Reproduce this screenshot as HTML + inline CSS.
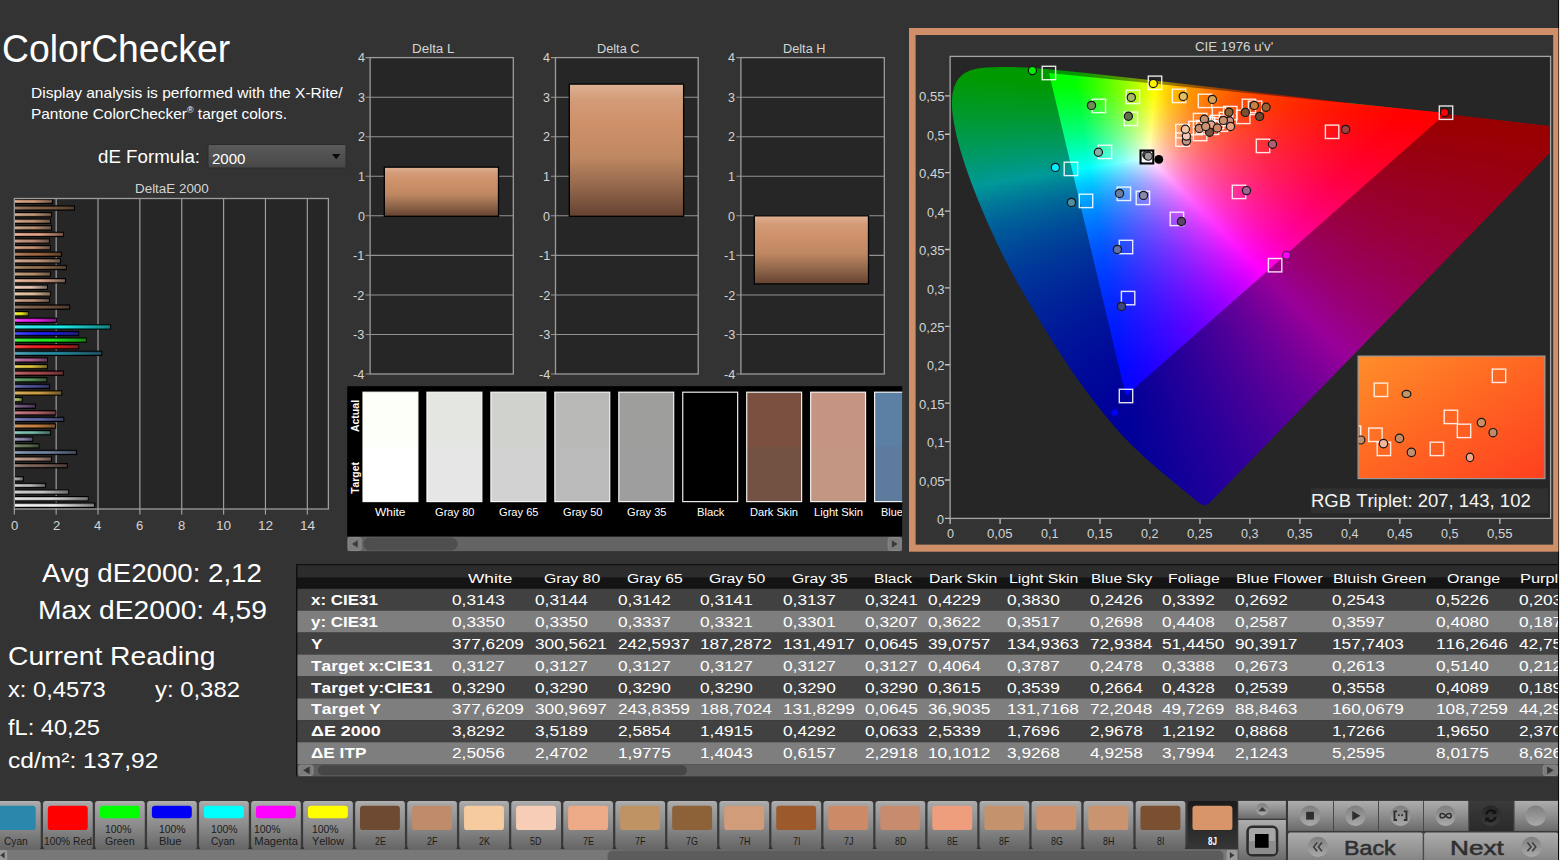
<!DOCTYPE html>
<html lang="en"><head><meta charset="utf-8"><title>ColorChecker</title>
<style>
html,body{margin:0;padding:0}
body{width:1561px;height:860px;overflow:hidden;background:#333;position:relative;font-family:"Liberation Sans",sans-serif;font-kerning:none}
svg{position:absolute;left:0;top:0}
.t{position:absolute;white-space:pre;line-height:1;color:#fff;transform-origin:0 0}
.cie{position:absolute;overflow:hidden}
.cl{position:absolute;left:0;top:0;width:100%;height:100%;box-sizing:border-box}
.cl i{display:block;height:2px}
</style></head>
<body>
<svg width="1561" height="860" viewBox="0 0 1561 860"><linearGradient id="dd" x1="0" y1="0" x2="0" y2="1"><stop offset="0" stop-color="#5a5a5a"/><stop offset="1" stop-color="#474747"/></linearGradient><rect x="208" y="144.5" width="138" height="23.5" rx="1.5" fill="url(#dd)" stroke="#2c2c2c"/><path d="M332 154h8.4l-4.2 5.2z" fill="#0a0a0a"/><rect x="14.3" y="198.5" width="314.1" height="310.5" fill="#262626"/><path d="M56.16 198.5V514.5M98.02 198.5V514.5M139.88 198.5V514.5M181.74 198.5V514.5M223.6 198.5V514.5M265.46 198.5V514.5M307.32 198.5V514.5M14.3 509V514.5" stroke="#a2a2a2" stroke-width="1.15" fill="none"/><linearGradient id="bs" x1="0" y1="0" x2="1" y2="0"><stop offset="0" stop-color="#fff" stop-opacity=".22"/><stop offset=".5" stop-color="#000" stop-opacity=".05"/><stop offset="1" stop-color="#000" stop-opacity=".55"/></linearGradient><linearGradient id="bv" x1="0" y1="0" x2="0" y2="1"><stop offset="0" stop-color="#000" stop-opacity=".3"/><stop offset=".5" stop-color="#fff" stop-opacity=".12"/><stop offset="1" stop-color="#000" stop-opacity=".3"/></linearGradient><rect x="14.4" y="503.15" width="80.16" height="4.3" fill="#ffffff" stroke="#000" stroke-width="1.1"/><rect x="14.9" y="503.7" width="79.16" height="3.2" fill="url(#bs)"/><rect x="14.9" y="503.7" width="79.16" height="3.2" fill="url(#bv)"/><rect x="14.4" y="496.54" width="73.67" height="4.3" fill="#e6e6e6" stroke="#000" stroke-width="1.1"/><rect x="14.9" y="497.09" width="72.67" height="3.2" fill="url(#bs)"/><rect x="14.9" y="497.09" width="72.67" height="3.2" fill="url(#bv)"/><rect x="14.4" y="489.93" width="54.21" height="4.3" fill="#d2d2d2" stroke="#000" stroke-width="1.1"/><rect x="14.9" y="490.48" width="53.21" height="3.2" fill="url(#bs)"/><rect x="14.9" y="490.48" width="53.21" height="3.2" fill="url(#bv)"/><rect x="14.4" y="483.33" width="31.19" height="4.3" fill="#bababa" stroke="#000" stroke-width="1.1"/><rect x="14.9" y="483.88" width="30.19" height="3.2" fill="url(#bs)"/><rect x="14.9" y="483.88" width="30.19" height="3.2" fill="url(#bv)"/><rect x="14.4" y="476.72" width="9" height="4.3" fill="#9e9e9e" stroke="#000" stroke-width="1.1"/><rect x="14.9" y="477.27" width="8" height="3.2" fill="url(#bs)"/><rect x="14.9" y="477.27" width="8" height="3.2" fill="url(#bv)"/><rect x="14.4" y="463.51" width="52.95" height="4.3" fill="#735244" stroke="#000" stroke-width="1.1"/><rect x="14.9" y="464.06" width="51.95" height="3.2" fill="url(#bs)"/><rect x="14.9" y="464.06" width="51.95" height="3.2" fill="url(#bv)"/><rect x="14.4" y="456.9" width="37.05" height="4.3" fill="#c29682" stroke="#000" stroke-width="1.1"/><rect x="14.9" y="457.45" width="36.05" height="3.2" fill="url(#bs)"/><rect x="14.9" y="457.45" width="36.05" height="3.2" fill="url(#bv)"/><rect x="14.4" y="450.3" width="62.16" height="4.3" fill="#627a9d" stroke="#000" stroke-width="1.1"/><rect x="14.9" y="450.85" width="61.16" height="3.2" fill="url(#bs)"/><rect x="14.9" y="450.85" width="61.16" height="3.2" fill="url(#bv)"/><rect x="14.4" y="443.69" width="24.7" height="4.3" fill="#576c43" stroke="#000" stroke-width="1.1"/><rect x="14.9" y="444.24" width="23.7" height="3.2" fill="url(#bs)"/><rect x="14.9" y="444.24" width="23.7" height="3.2" fill="url(#bv)"/><rect x="14.4" y="437.08" width="18.42" height="4.3" fill="#8580b1" stroke="#000" stroke-width="1.1"/><rect x="14.9" y="437.63" width="17.42" height="3.2" fill="url(#bs)"/><rect x="14.9" y="437.63" width="17.42" height="3.2" fill="url(#bv)"/><rect x="14.4" y="430.48" width="36.21" height="4.3" fill="#67bdaa" stroke="#000" stroke-width="1.1"/><rect x="14.9" y="431.03" width="35.21" height="3.2" fill="url(#bs)"/><rect x="14.9" y="431.03" width="35.21" height="3.2" fill="url(#bv)"/><rect x="14.4" y="423.87" width="41.23" height="4.3" fill="#d67e2c" stroke="#000" stroke-width="1.1"/><rect x="14.9" y="424.42" width="40.23" height="3.2" fill="url(#bs)"/><rect x="14.9" y="424.42" width="40.23" height="3.2" fill="url(#bv)"/><rect x="14.4" y="417.26" width="49.39" height="4.3" fill="#505ba6" stroke="#000" stroke-width="1.1"/><rect x="14.9" y="417.81" width="48.39" height="3.2" fill="url(#bs)"/><rect x="14.9" y="417.81" width="48.39" height="3.2" fill="url(#bv)"/><rect x="14.4" y="410.66" width="41.44" height="4.3" fill="#c15a63" stroke="#000" stroke-width="1.1"/><rect x="14.9" y="411.21" width="40.44" height="3.2" fill="url(#bs)"/><rect x="14.9" y="411.21" width="40.44" height="3.2" fill="url(#bv)"/><rect x="14.4" y="404.05" width="21.14" height="4.3" fill="#5e3c6c" stroke="#000" stroke-width="1.1"/><rect x="14.9" y="404.6" width="20.14" height="3.2" fill="url(#bs)"/><rect x="14.9" y="404.6" width="20.14" height="3.2" fill="url(#bv)"/><rect x="14.4" y="397.44" width="7.95" height="4.3" fill="#9dbc40" stroke="#000" stroke-width="1.1"/><rect x="14.9" y="397.99" width="6.95" height="3.2" fill="url(#bs)"/><rect x="14.9" y="397.99" width="6.95" height="3.2" fill="url(#bv)"/><rect x="14.4" y="390.84" width="47.3" height="4.3" fill="#e0a32e" stroke="#000" stroke-width="1.1"/><rect x="14.9" y="391.39" width="46.3" height="3.2" fill="url(#bs)"/><rect x="14.9" y="391.39" width="46.3" height="3.2" fill="url(#bv)"/><rect x="14.4" y="384.23" width="35.16" height="4.3" fill="#383d96" stroke="#000" stroke-width="1.1"/><rect x="14.9" y="384.78" width="34.16" height="3.2" fill="url(#bs)"/><rect x="14.9" y="384.78" width="34.16" height="3.2" fill="url(#bv)"/><rect x="14.4" y="377.63" width="32.44" height="4.3" fill="#469449" stroke="#000" stroke-width="1.1"/><rect x="14.9" y="378.18" width="31.44" height="3.2" fill="url(#bs)"/><rect x="14.9" y="378.18" width="31.44" height="3.2" fill="url(#bv)"/><rect x="14.4" y="371.02" width="48.98" height="4.3" fill="#af363c" stroke="#000" stroke-width="1.1"/><rect x="14.9" y="371.57" width="47.98" height="3.2" fill="url(#bs)"/><rect x="14.9" y="371.57" width="47.98" height="3.2" fill="url(#bv)"/><rect x="14.4" y="364.41" width="33.07" height="4.3" fill="#e7c71f" stroke="#000" stroke-width="1.1"/><rect x="14.9" y="364.96" width="32.07" height="3.2" fill="url(#bs)"/><rect x="14.9" y="364.96" width="32.07" height="3.2" fill="url(#bv)"/><rect x="14.4" y="357.81" width="33.07" height="4.3" fill="#bb5695" stroke="#000" stroke-width="1.1"/><rect x="14.9" y="358.36" width="32.07" height="3.2" fill="url(#bs)"/><rect x="14.9" y="358.36" width="32.07" height="3.2" fill="url(#bv)"/><rect x="14.4" y="351.2" width="87.28" height="4.3" fill="#0885a1" stroke="#000" stroke-width="1.1"/><rect x="14.9" y="351.75" width="86.28" height="3.2" fill="url(#bs)"/><rect x="14.9" y="351.75" width="86.28" height="3.2" fill="url(#bv)"/><rect x="14.4" y="344.59" width="64.26" height="4.3" fill="#ff0000" stroke="#000" stroke-width="1.1"/><rect x="14.9" y="345.14" width="63.26" height="3.2" fill="url(#bs)"/><rect x="14.9" y="345.14" width="63.26" height="3.2" fill="url(#bv)"/><rect x="14.4" y="337.99" width="71.79" height="4.3" fill="#00ff00" stroke="#000" stroke-width="1.1"/><rect x="14.9" y="338.54" width="70.79" height="3.2" fill="url(#bs)"/><rect x="14.9" y="338.54" width="70.79" height="3.2" fill="url(#bv)"/><rect x="14.4" y="331.38" width="64.26" height="4.3" fill="#0000ff" stroke="#000" stroke-width="1.1"/><rect x="14.9" y="331.93" width="63.26" height="3.2" fill="url(#bs)"/><rect x="14.9" y="331.93" width="63.26" height="3.2" fill="url(#bv)"/><rect x="14.4" y="324.77" width="96.07" height="4.3" fill="#00ffff" stroke="#000" stroke-width="1.1"/><rect x="14.9" y="325.32" width="95.07" height="3.2" fill="url(#bs)"/><rect x="14.9" y="325.32" width="95.07" height="3.2" fill="url(#bv)"/><rect x="14.4" y="318.17" width="42.07" height="4.3" fill="#ff00ff" stroke="#000" stroke-width="1.1"/><rect x="14.9" y="318.72" width="41.07" height="3.2" fill="url(#bs)"/><rect x="14.9" y="318.72" width="41.07" height="3.2" fill="url(#bv)"/><rect x="14.4" y="311.56" width="13.81" height="4.3" fill="#ffff00" stroke="#000" stroke-width="1.1"/><rect x="14.9" y="312.11" width="12.81" height="3.2" fill="url(#bs)"/><rect x="14.9" y="312.11" width="12.81" height="3.2" fill="url(#bv)"/><rect x="14.4" y="304.96" width="55.26" height="4.3" fill="#6f4a32" stroke="#000" stroke-width="1.1"/><rect x="14.9" y="305.51" width="54.26" height="3.2" fill="url(#bs)"/><rect x="14.9" y="305.51" width="54.26" height="3.2" fill="url(#bv)"/><rect x="14.4" y="298.35" width="34.95" height="4.3" fill="#c08b6b" stroke="#000" stroke-width="1.1"/><rect x="14.9" y="298.9" width="33.95" height="3.2" fill="url(#bs)"/><rect x="14.9" y="298.9" width="33.95" height="3.2" fill="url(#bv)"/><rect x="14.4" y="291.74" width="36" height="4.3" fill="#f6cba0" stroke="#000" stroke-width="1.1"/><rect x="14.9" y="292.29" width="35" height="3.2" fill="url(#bs)"/><rect x="14.9" y="292.29" width="35" height="3.2" fill="url(#bv)"/><rect x="14.4" y="285.14" width="33.07" height="4.3" fill="#f8cdb8" stroke="#000" stroke-width="1.1"/><rect x="14.9" y="285.69" width="32.07" height="3.2" fill="url(#bs)"/><rect x="14.9" y="285.69" width="32.07" height="3.2" fill="url(#bv)"/><rect x="14.4" y="278.53" width="51.07" height="4.3" fill="#edaa86" stroke="#000" stroke-width="1.1"/><rect x="14.9" y="279.08" width="50.07" height="3.2" fill="url(#bs)"/><rect x="14.9" y="279.08" width="50.07" height="3.2" fill="url(#bv)"/><rect x="14.4" y="271.92" width="36" height="4.3" fill="#c09364" stroke="#000" stroke-width="1.1"/><rect x="14.9" y="272.47" width="35" height="3.2" fill="url(#bs)"/><rect x="14.9" y="272.47" width="35" height="3.2" fill="url(#bv)"/><rect x="14.4" y="265.32" width="51.91" height="4.3" fill="#8e6238" stroke="#000" stroke-width="1.1"/><rect x="14.9" y="265.87" width="50.91" height="3.2" fill="url(#bs)"/><rect x="14.9" y="265.87" width="50.91" height="3.2" fill="url(#bv)"/><rect x="14.4" y="258.71" width="46.05" height="4.3" fill="#d09c7a" stroke="#000" stroke-width="1.1"/><rect x="14.9" y="259.26" width="45.05" height="3.2" fill="url(#bs)"/><rect x="14.9" y="259.26" width="45.05" height="3.2" fill="url(#bv)"/><rect x="14.4" y="252.1" width="47.09" height="4.3" fill="#9c5a2c" stroke="#000" stroke-width="1.1"/><rect x="14.9" y="252.65" width="46.09" height="3.2" fill="url(#bs)"/><rect x="14.9" y="252.65" width="46.09" height="3.2" fill="url(#bv)"/><rect x="14.4" y="245.5" width="36" height="4.3" fill="#cc8a66" stroke="#000" stroke-width="1.1"/><rect x="14.9" y="246.05" width="35" height="3.2" fill="url(#bs)"/><rect x="14.9" y="246.05" width="35" height="3.2" fill="url(#bv)"/><rect x="14.4" y="238.89" width="34.95" height="4.3" fill="#c98b6e" stroke="#000" stroke-width="1.1"/><rect x="14.9" y="239.44" width="33.95" height="3.2" fill="url(#bs)"/><rect x="14.9" y="239.44" width="33.95" height="3.2" fill="url(#bv)"/><rect x="14.4" y="232.29" width="48.98" height="4.3" fill="#ee9e7c" stroke="#000" stroke-width="1.1"/><rect x="14.9" y="232.84" width="47.98" height="3.2" fill="url(#bs)"/><rect x="14.9" y="232.84" width="47.98" height="3.2" fill="url(#bv)"/><rect x="14.4" y="225.68" width="37.05" height="4.3" fill="#c4926c" stroke="#000" stroke-width="1.1"/><rect x="14.9" y="226.23" width="36.05" height="3.2" fill="url(#bs)"/><rect x="14.9" y="226.23" width="36.05" height="3.2" fill="url(#bv)"/><rect x="14.4" y="219.07" width="36" height="4.3" fill="#cc9370" stroke="#000" stroke-width="1.1"/><rect x="14.9" y="219.62" width="35" height="3.2" fill="url(#bs)"/><rect x="14.9" y="219.62" width="35" height="3.2" fill="url(#bv)"/><rect x="14.4" y="212.47" width="37.05" height="4.3" fill="#c9946f" stroke="#000" stroke-width="1.1"/><rect x="14.9" y="213.02" width="36.05" height="3.2" fill="url(#bs)"/><rect x="14.9" y="213.02" width="36.05" height="3.2" fill="url(#bv)"/><rect x="14.4" y="205.86" width="60.07" height="4.3" fill="#7b5030" stroke="#000" stroke-width="1.1"/><rect x="14.9" y="206.41" width="59.07" height="3.2" fill="url(#bs)"/><rect x="14.9" y="206.41" width="59.07" height="3.2" fill="url(#bv)"/><rect x="14.4" y="199.25" width="38.09" height="4.3" fill="#d8956a" stroke="#000" stroke-width="1.1"/><rect x="14.9" y="199.8" width="37.09" height="3.2" fill="url(#bs)"/><rect x="14.9" y="199.8" width="37.09" height="3.2" fill="url(#bv)"/><rect x="14.3" y="198.5" width="314.1" height="310.5" fill="none" stroke="#9c9c9c" stroke-width="1.3"/><linearGradient id="sk" x1="0" y1="0" x2="0" y2="1"><stop offset="0" stop-color="#deb294"/><stop offset=".12" stop-color="#d39b78"/><stop offset=".3" stop-color="#ce916a"/><stop offset=".55" stop-color="#bf8862"/><stop offset=".8" stop-color="#8e6449"/><stop offset="1" stop-color="#654231"/></linearGradient><rect x="370.1" y="57.6" width="143.2" height="316.4" fill="#262626"/><path d="M365.5 334.45H513.3M365.5 294.9H513.3M365.5 255.35H513.3M365.5 215.8H513.3M365.5 176.25H513.3M365.5 136.7H513.3M365.5 97.15H513.3M365.5 57.6H370.1M365.5 374H370.1" stroke="#929292" stroke-width="1.05" fill="none"/><rect x="370.1" y="57.6" width="143.2" height="316.4" fill="none" stroke="#9c9c9c" stroke-width="1.3"/><rect x="384.3" y="167.15" width="114.2" height="49.15" fill="url(#sk)" stroke="#000" stroke-width="1.3"/><rect x="555.5" y="57.6" width="142.7" height="316.4" fill="#262626"/><path d="M550.9 334.45H698.2M550.9 294.9H698.2M550.9 255.35H698.2M550.9 215.8H698.2M550.9 176.25H698.2M550.9 136.7H698.2M550.9 97.15H698.2M550.9 57.6H555.5M550.9 374H555.5" stroke="#929292" stroke-width="1.05" fill="none"/><rect x="555.5" y="57.6" width="142.7" height="316.4" fill="none" stroke="#9c9c9c" stroke-width="1.3"/><rect x="569.3" y="84.1" width="114.3" height="132.2" fill="url(#sk)" stroke="#000" stroke-width="1.3"/><rect x="740.9" y="57.6" width="143.4" height="316.4" fill="#262626"/><path d="M736.3 334.45H884.3M736.3 294.9H884.3M736.3 255.35H884.3M736.3 215.8H884.3M736.3 176.25H884.3M736.3 136.7H884.3M736.3 97.15H884.3M736.3 57.6H740.9M736.3 374H740.9" stroke="#929292" stroke-width="1.05" fill="none"/><rect x="740.9" y="57.6" width="143.4" height="316.4" fill="none" stroke="#9c9c9c" stroke-width="1.3"/><rect x="754.3" y="215.8" width="114.2" height="68.13" fill="url(#sk)" stroke="#000" stroke-width="1.3"/><rect x="347.2" y="386.2" width="555" height="165.2" fill="#000"/><clipPath id="swc"><rect x="347.2" y="386.2" width="555" height="165.2"/></clipPath><g clip-path="url(#swc)"><rect x="363" y="392.2" width="54.9" height="54.9" fill="#fdfff9"/><rect x="363" y="446.9" width="54.9" height="54.7" fill="#ffffff"/><rect x="363" y="392.2" width="54.9" height="109.4" fill="none" stroke="#fff" stroke-width="1.2" stroke-opacity=".92"/><rect x="426.95" y="392.2" width="54.9" height="54.9" fill="#e3e6e1"/><rect x="426.95" y="446.9" width="54.9" height="54.7" fill="#e6e6e6"/><rect x="426.95" y="392.2" width="54.9" height="109.4" fill="none" stroke="#fff" stroke-width="1.2" stroke-opacity=".92"/><rect x="490.9" y="392.2" width="54.9" height="54.9" fill="#d0d2cd"/><rect x="490.9" y="446.9" width="54.9" height="54.7" fill="#d2d2d2"/><rect x="490.9" y="392.2" width="54.9" height="109.4" fill="none" stroke="#fff" stroke-width="1.2" stroke-opacity=".92"/><rect x="554.85" y="392.2" width="54.9" height="54.9" fill="#b9bab8"/><rect x="554.85" y="446.9" width="54.9" height="54.7" fill="#bababa"/><rect x="554.85" y="392.2" width="54.9" height="109.4" fill="none" stroke="#fff" stroke-width="1.2" stroke-opacity=".92"/><rect x="618.8" y="392.2" width="54.9" height="54.9" fill="#9e9f9d"/><rect x="618.8" y="446.9" width="54.9" height="54.7" fill="#9e9e9e"/><rect x="618.8" y="392.2" width="54.9" height="109.4" fill="none" stroke="#fff" stroke-width="1.2" stroke-opacity=".92"/><rect x="682.75" y="392.2" width="54.9" height="54.9" fill="#000000"/><rect x="682.75" y="446.9" width="54.9" height="54.7" fill="#000000"/><rect x="682.75" y="392.2" width="54.9" height="109.4" fill="none" stroke="#fff" stroke-width="1.2" stroke-opacity=".92"/><rect x="746.7" y="392.2" width="54.9" height="54.9" fill="#7c5040"/><rect x="746.7" y="446.9" width="54.9" height="54.7" fill="#735244"/><rect x="746.7" y="392.2" width="54.9" height="109.4" fill="none" stroke="#fff" stroke-width="1.2" stroke-opacity=".92"/><rect x="810.65" y="392.2" width="54.9" height="54.9" fill="#c69483"/><rect x="810.65" y="446.9" width="54.9" height="54.7" fill="#c29682"/><rect x="810.65" y="392.2" width="54.9" height="109.4" fill="none" stroke="#fff" stroke-width="1.2" stroke-opacity=".92"/><rect x="874.6" y="392.2" width="54.9" height="54.9" fill="#5b80a4"/><rect x="874.6" y="446.9" width="54.9" height="54.7" fill="#5e7a9c"/><rect x="874.6" y="392.2" width="54.9" height="109.4" fill="none" stroke="#fff" stroke-width="1.2" stroke-opacity=".92"/></g><rect x="347.2" y="536.6" width="555" height="14.8" fill="#646464"/><rect x="363.4" y="537.6" width="94.2" height="12.8" rx="6.4" fill="#4e4e4e"/><rect x="348.2" y="537.6" width="13" height="12.8" rx="2" fill="#7c7c7c" stroke="#8a8a8a"/><path d="M357.7 540.2v7.6l-5.6-3.8z" fill="#3a3a3a"/><rect x="888.2" y="537.6" width="13" height="12.8" rx="2" fill="#7c7c7c" stroke="#8a8a8a"/><path d="M891.9 540.2v7.6l5.6-3.8z" fill="#3a3a3a"/><rect x="296" y="564" width="1262.2" height="212.4" fill="#0e0e0e"/><rect x="297.4" y="565.2" width="1260.8" height="12.5" fill="#2c2c2c"/><rect x="297.4" y="577.7" width="1260.8" height="11" fill="#141414"/><rect x="297.4" y="588.7" width="1260.8" height="22.03" fill="#414141"/><rect x="297.4" y="610.63" width="1260.8" height="22.03" fill="#7e7e7e"/><rect x="297.4" y="632.56" width="1260.8" height="22.03" fill="#414141"/><rect x="297.4" y="654.49" width="1260.8" height="22.03" fill="#7e7e7e"/><rect x="297.4" y="676.42" width="1260.8" height="22.03" fill="#414141"/><rect x="297.4" y="698.35" width="1260.8" height="22.03" fill="#7e7e7e"/><rect x="297.4" y="720.28" width="1260.8" height="22.03" fill="#414141"/><rect x="297.4" y="742.21" width="1260.8" height="22.03" fill="#7e7e7e"/><rect x="297.4" y="764.14" width="1260.8" height="12.4" fill="#5e5e5e"/><rect x="317.9" y="765.34" width="369" height="10" rx="5" fill="#464646"/><rect x="298.8" y="765.14" width="14.2" height="10.4" rx="2" fill="#7c7c7c" stroke="#8a8a8a"/><path d="M309.6 766.54v7.6l-6.4-3.8z" fill="#333"/><rect x="1543.2" y="765.14" width="14.2" height="10.4" rx="2" fill="#7c7c7c" stroke="#8a8a8a"/><path d="M1547.2 766.54v7.6l6.4-3.8z" fill="#333"/><linearGradient id="tb" x1="0" y1="0" x2="0" y2="1"><stop offset="0" stop-color="#b4b4b4"/><stop offset=".06" stop-color="#a6a6a6"/><stop offset=".5" stop-color="#8c8c8c"/><stop offset="1" stop-color="#656565"/></linearGradient><linearGradient id="ts" x1="0" y1="0" x2="0" y2="1"><stop offset="0" stop-color="#1b1b1b"/><stop offset="1" stop-color="#363636"/></linearGradient><linearGradient id="bt" x1="0" y1="0" x2="0" y2="1"><stop offset="0" stop-color="#adadad"/><stop offset=".5" stop-color="#8e8e8e"/><stop offset="1" stop-color="#6a6a6a"/></linearGradient><linearGradient id="bd" x1="0" y1="0" x2="0" y2="1"><stop offset="0" stop-color="#3a3a3a"/><stop offset="1" stop-color="#2a2a2a"/></linearGradient><linearGradient id="ci" x1="0" y1="0" x2="0" y2="1"><stop offset="0" stop-color="#7e7e7e"/><stop offset="1" stop-color="#aaa"/></linearGradient><linearGradient id="cd" x1="0" y1="0" x2="0" y2="1"><stop offset="0" stop-color="#262626"/><stop offset="1" stop-color="#3c3c3c"/></linearGradient><rect x="0" y="802.4" width="1238" height="46.9" fill="#3a3a3a"/><path d="M-9.03 849.3V803.9q0-3 3-3H37.7q3 0 3 3V849.3z" fill="url(#tb)"/><rect x="-4.23" y="805.7" width="39.93" height="24.4" rx="3.2" fill="#2a88ad"/><path d="M43 849.3V803.9q0-3 3-3H89.73q3 0 3 3V849.3z" fill="url(#tb)"/><rect x="47.8" y="805.7" width="39.93" height="24.4" rx="3.2" fill="#ff0000"/><path d="M95.03 849.3V803.9q0-3 3-3H141.76q3 0 3 3V849.3z" fill="url(#tb)"/><rect x="99.83" y="805.7" width="39.93" height="12.6" rx="3.2" fill="#00ff00"/><path d="M147.06 849.3V803.9q0-3 3-3H193.79q3 0 3 3V849.3z" fill="url(#tb)"/><rect x="151.86" y="805.7" width="39.93" height="12.6" rx="3.2" fill="#0000f4"/><path d="M199.09 849.3V803.9q0-3 3-3H245.82q3 0 3 3V849.3z" fill="url(#tb)"/><rect x="203.89" y="805.7" width="39.93" height="12.6" rx="3.2" fill="#00ffff"/><path d="M251.12 849.3V803.9q0-3 3-3H297.85q3 0 3 3V849.3z" fill="url(#tb)"/><rect x="255.92" y="805.7" width="39.93" height="12.6" rx="3.2" fill="#ff00ff"/><path d="M303.15 849.3V803.9q0-3 3-3H349.88q3 0 3 3V849.3z" fill="url(#tb)"/><rect x="307.95" y="805.7" width="39.93" height="12.6" rx="3.2" fill="#ffff00"/><path d="M355.18 849.3V803.9q0-3 3-3H401.91q3 0 3 3V849.3z" fill="url(#tb)"/><rect x="359.98" y="805.7" width="39.93" height="24.4" rx="3.2" fill="#6f4a32"/><path d="M407.21 849.3V803.9q0-3 3-3H453.94q3 0 3 3V849.3z" fill="url(#tb)"/><rect x="412.01" y="805.7" width="39.93" height="24.4" rx="3.2" fill="#c08b6b"/><path d="M459.24 849.3V803.9q0-3 3-3H505.97q3 0 3 3V849.3z" fill="url(#tb)"/><rect x="464.04" y="805.7" width="39.93" height="24.4" rx="3.2" fill="#f6cba0"/><path d="M511.27 849.3V803.9q0-3 3-3H558q3 0 3 3V849.3z" fill="url(#tb)"/><rect x="516.07" y="805.7" width="39.93" height="24.4" rx="3.2" fill="#f8cdb8"/><path d="M563.3 849.3V803.9q0-3 3-3H610.03q3 0 3 3V849.3z" fill="url(#tb)"/><rect x="568.1" y="805.7" width="39.93" height="24.4" rx="3.2" fill="#edaa86"/><path d="M615.33 849.3V803.9q0-3 3-3H662.06q3 0 3 3V849.3z" fill="url(#tb)"/><rect x="620.13" y="805.7" width="39.93" height="24.4" rx="3.2" fill="#c09364"/><path d="M667.36 849.3V803.9q0-3 3-3H714.09q3 0 3 3V849.3z" fill="url(#tb)"/><rect x="672.16" y="805.7" width="39.93" height="24.4" rx="3.2" fill="#8e6238"/><path d="M719.39 849.3V803.9q0-3 3-3H766.12q3 0 3 3V849.3z" fill="url(#tb)"/><rect x="724.19" y="805.7" width="39.93" height="24.4" rx="3.2" fill="#d09c7a"/><path d="M771.42 849.3V803.9q0-3 3-3H818.15q3 0 3 3V849.3z" fill="url(#tb)"/><rect x="776.22" y="805.7" width="39.93" height="24.4" rx="3.2" fill="#9c5a2c"/><path d="M823.45 849.3V803.9q0-3 3-3H870.18q3 0 3 3V849.3z" fill="url(#tb)"/><rect x="828.25" y="805.7" width="39.93" height="24.4" rx="3.2" fill="#cc8a66"/><path d="M875.48 849.3V803.9q0-3 3-3H922.21q3 0 3 3V849.3z" fill="url(#tb)"/><rect x="880.28" y="805.7" width="39.93" height="24.4" rx="3.2" fill="#c98b6e"/><path d="M927.51 849.3V803.9q0-3 3-3H974.24q3 0 3 3V849.3z" fill="url(#tb)"/><rect x="932.31" y="805.7" width="39.93" height="24.4" rx="3.2" fill="#ee9e7c"/><path d="M979.54 849.3V803.9q0-3 3-3H1026.27q3 0 3 3V849.3z" fill="url(#tb)"/><rect x="984.34" y="805.7" width="39.93" height="24.4" rx="3.2" fill="#c4926c"/><path d="M1031.57 849.3V803.9q0-3 3-3H1078.3q3 0 3 3V849.3z" fill="url(#tb)"/><rect x="1036.37" y="805.7" width="39.93" height="24.4" rx="3.2" fill="#cc9370"/><path d="M1083.6 849.3V803.9q0-3 3-3H1130.33q3 0 3 3V849.3z" fill="url(#tb)"/><rect x="1088.4" y="805.7" width="39.93" height="24.4" rx="3.2" fill="#c9946f"/><path d="M1135.63 849.3V803.9q0-3 3-3H1182.36q3 0 3 3V849.3z" fill="url(#tb)"/><rect x="1140.43" y="805.7" width="39.93" height="24.4" rx="3.2" fill="#7b5030"/><path d="M1187.66 849.3V803.9q0-3 3-3H1234.39q3 0 3 3V849.3z" fill="url(#ts)"/><rect x="1192.46" y="805.7" width="39.93" height="24.4" rx="3.2" fill="#d8956a"/><path d="M41.9 846.1l-2.2 3.4h5l-2.2-3.4z" fill="#333"/><path d="M93.93 846.1l-2.2 3.4h5l-2.2-3.4z" fill="#333"/><path d="M145.96 846.1l-2.2 3.4h5l-2.2-3.4z" fill="#333"/><path d="M197.99 846.1l-2.2 3.4h5l-2.2-3.4z" fill="#333"/><path d="M250.02 846.1l-2.2 3.4h5l-2.2-3.4z" fill="#333"/><path d="M302.05 846.1l-2.2 3.4h5l-2.2-3.4z" fill="#333"/><path d="M354.08 846.1l-2.2 3.4h5l-2.2-3.4z" fill="#333"/><path d="M406.11 846.1l-2.2 3.4h5l-2.2-3.4z" fill="#333"/><path d="M458.14 846.1l-2.2 3.4h5l-2.2-3.4z" fill="#333"/><path d="M510.17 846.1l-2.2 3.4h5l-2.2-3.4z" fill="#333"/><path d="M562.2 846.1l-2.2 3.4h5l-2.2-3.4z" fill="#333"/><path d="M614.23 846.1l-2.2 3.4h5l-2.2-3.4z" fill="#333"/><path d="M666.26 846.1l-2.2 3.4h5l-2.2-3.4z" fill="#333"/><path d="M718.29 846.1l-2.2 3.4h5l-2.2-3.4z" fill="#333"/><path d="M770.32 846.1l-2.2 3.4h5l-2.2-3.4z" fill="#333"/><path d="M822.35 846.1l-2.2 3.4h5l-2.2-3.4z" fill="#333"/><path d="M874.38 846.1l-2.2 3.4h5l-2.2-3.4z" fill="#333"/><path d="M926.41 846.1l-2.2 3.4h5l-2.2-3.4z" fill="#333"/><path d="M978.44 846.1l-2.2 3.4h5l-2.2-3.4z" fill="#333"/><path d="M1030.47 846.1l-2.2 3.4h5l-2.2-3.4z" fill="#333"/><path d="M1082.5 846.1l-2.2 3.4h5l-2.2-3.4z" fill="#333"/><path d="M1134.53 846.1l-2.2 3.4h5l-2.2-3.4z" fill="#333"/><path d="M1186.56 846.1l-2.2 3.4h5l-2.2-3.4z" fill="#333"/><rect x="0" y="849.3" width="1238" height="10.7" fill="#787878"/><rect x="607.5" y="850.5" width="616" height="12" rx="5" fill="#5c5c5c"/><rect x="-2" y="850.1" width="9.2" height="12" rx="1.5" fill="#9a9a9a"/><path d="M4.6 852v6.6l-4.4-3.3z" fill="#3a3a3a"/><rect x="1226.6" y="850.1" width="10.6" height="12" rx="1.5" fill="#9a9a9a"/><path d="M1229.8 852v6.6l4.6-3.3z" fill="#3a3a3a"/><rect x="1238.3" y="800.9" width="47.6" height="18" fill="url(#bt)"/><rect x="1238.3" y="819.8" width="47.6" height="41" fill="url(#bt)"/><path d="M1238.3 819.3L1286 819.3" stroke="#3c3c3c" stroke-width="1.2"/><circle cx="1262.3" cy="809.2" r="6.2" fill="url(#ci)"/><path d="M1258.3 811.3h8l-4-4.4z" fill="#3a3a3a"/><rect x="1247.6" y="826.8" width="29.4" height="28.4" rx="4.5" fill="#a6a6a6" stroke="#2c2c2c" stroke-width="2.6"/><rect x="1248.9" y="841" width="26.8" height="12.9" rx="2" fill="#8c8c8c"/><rect x="1255" y="834" width="13.6" height="13.8" fill="#000"/><rect x="1288" y="800.9" width="45.3" height="30" fill="url(#bt)"/><circle cx="1310.05" cy="815.7" r="10.2" fill="url(#ci)"/><rect x="1333.9" y="800.9" width="44.3" height="30" fill="url(#bt)"/><circle cx="1355.45" cy="815.7" r="10.2" fill="url(#ci)"/><rect x="1378.8" y="800.9" width="44.5" height="30" fill="url(#bt)"/><circle cx="1400.45" cy="815.7" r="10.2" fill="url(#ci)"/><rect x="1423.9" y="800.9" width="44.6" height="30" fill="url(#bt)"/><circle cx="1445.6" cy="815.7" r="10.2" fill="url(#ci)"/><rect x="1469.1" y="800.9" width="44.6" height="30" fill="url(#bd)"/><circle cx="1490.8" cy="815.7" r="10.2" fill="url(#cd)"/><rect x="1514.3" y="800.9" width="43.9" height="30" fill="url(#bt)"/><circle cx="1535.65" cy="815.7" r="10.2" fill="url(#ci)"/><rect x="1286.2" y="800.9" width="1.4" height="60" fill="#3a3a3a"/><rect x="1333.1" y="800.9" width="0.9" height="30" fill="#4a4a4a"/><rect x="1378" y="800.9" width="0.9" height="30" fill="#4a4a4a"/><rect x="1423.1" y="800.9" width="0.9" height="30" fill="#4a4a4a"/><rect x="1468.3" y="800.9" width="0.9" height="30" fill="#4a4a4a"/><rect x="1513.5" y="800.9" width="0.9" height="30" fill="#4a4a4a"/><rect x="1306.15" y="811.8" width="7.8" height="7.8" fill="#2e2e2e"/><path d="M1352.25 811v9.6l8.2-4.8z" fill="#2e2e2e"/><path d="M1397.05 811.4h-2.6v8.6h2.6M1403.85 811.4h2.6v8.6h-2.6" fill="none" stroke="#2e2e2e" stroke-width="1.9"/><path d="M1397.95 815.2h1.7M1401.25 815.2h1.7" stroke="#2e2e2e" stroke-width="1.8"/><path d="M1445.6 815.7c-1.6-2.9-5.6-2.9-5.6 0s4 2.9 5.6 0c1.6-2.9 5.6-2.9 5.6 0s-4 2.9-5.6 0z" fill="none" stroke="#2e2e2e" stroke-width="1.5"/><path d="M1486.2 814.6a4.8 4.8 0 0 1 8.6-2.2M1495.4 816.8a4.8 4.8 0 0 1-8.6 2.2" fill="none" stroke="#141414" stroke-width="2.4"/><path d="M1496.4 809.2v4.8h-4.8zM1485.2 822.2v-4.8h4.8z" fill="#141414"/><rect x="1288" y="832.2" width="134.9" height="44" rx="2.5" fill="url(#bt)"/><rect x="1424" y="832.2" width="134.2" height="44" rx="2.5" fill="url(#bt)"/><rect x="1286.5" y="831" width="272" height="1.3" fill="#3a3a3a"/><rect x="1422.8" y="832" width="1.3" height="28" fill="#4a4a4a"/><circle cx="1317.9" cy="846.9" r="10.2" fill="url(#ci)"/><circle cx="1531.5" cy="846.9" r="10.2" fill="url(#ci)"/><path d="M1317.2 842.5l-3.6 4.4 3.6 4.4M1322 842.5l-3.6 4.4 3.6 4.4" fill="none" stroke="#3a3a3a" stroke-width="1.5"/><path d="M1527.4 842.5l3.6 4.4-3.6 4.4M1532.2 842.5l3.6 4.4-3.6 4.4" fill="none" stroke="#3a3a3a" stroke-width="1.5"/><rect x="1558" y="0" width="1.1" height="860" fill="#0a0a0a"/><rect x="1559.1" y="0" width="1.9" height="860" fill="#fff"/><rect x="909" y="28" width="649.4" height="523.7" fill="#cf8f68"/><rect x="915.6" y="35" width="637.6" height="509.6" fill="#333"/><rect x="950.1" y="56.4" width="600.5" height="462" fill="#262626"/></svg>
<div class="cie" style="left:951px;top:57px;width:599px;height:461px"><div class="cl" style="clip-path:polygon(258.5px 446.1px,256.4px 447.6px,253.9px 448.2px,252.6px 448.1px,250.1px 447.3px,246.2px 444.5px,208.1px 413px,196.8px 403.2px,180.1px 387.6px,168.3px 375.2px,154.1px 358.6px,143.5px 345.1px,132.1px 330px,120.2px 313.2px,114.1px 304.1px,101.5px 284.6px,88.7px 263.7px,75.8px 242px,63.3px 219.9px,51.6px 197.7px,46.2px 186.7px,36.3px 165.1px,27.6px 144.6px,20.2px 125.4px,14px 107.9px,9.1px 92.3px,5.5px 78.5px,3px 66.6px,1.5px 56.3px,1.1px 51.7px,0.9px 43.4px,1.6px 36.3px,3.1px 30.2px,5.3px 25.1px,6.7px 22.8px,10px 19px,13.7px 16.1px,15.8px 14.9px,20.2px 13px,27.6px 11.2px,35.5px 10.4px,49.5px 9.9px,63.8px 10.1px,78.7px 10.8px,98.1px 12.2px,135.3px 15.9px,196.5px 22.7px,622.4px 71.7px);padding-top:8px"><i style="background:linear-gradient(90deg,#090 41.5px,#090 60.5px)"></i><i style="background:linear-gradient(90deg,#090 23.5px,#090 96.5px)"></i><i style="background:linear-gradient(90deg,#090 15.5px,#090 117.5px)"></i><i style="background:linear-gradient(90deg,#090 12.5px,#090 100.5px,#090 96.5px,#090 122.5px,#179900 137.5px)"></i><i style="background:linear-gradient(90deg,#090 9.5px,#090 100.5px,#090 116.5px,#090 122.5px,#329900 154.5px)"></i><i style="background:linear-gradient(90deg,#009901 7.5px,#090 101.5px,#159900 136.5px,#590 173.5px)"></i><i style="background:linear-gradient(90deg,#009904 5.5px,#090 101.5px,#359900 156.5px,#749900 188.5px)"></i><i style="background:linear-gradient(90deg,#009906 4.5px,#090 102.5px,#599900 175.5px,#990 204.5px,#998d00 209.5px)"></i><i style="background:linear-gradient(90deg,#009908 3.5px,#090 102.5px,#849900 195.5px,#999800 204.5px,#996e00 226.5px)"></i><i style="background:linear-gradient(90deg,#00990a 2.5px,#009901 103.5px,#998000 215.5px,#995700 244.5px)"></i><i style="background:linear-gradient(90deg,#00990c 1.5px,#009903 103.5px,#996100 235.5px,#994a00 257.5px)"></i><i style="background:linear-gradient(90deg,#00990e 1.5px,#009906 104.5px,#994b00 255.5px,#993a00 276.5px)"></i><i style="background:linear-gradient(90deg,#091 0.5px,#009908 104.5px,#993b00 275.5px,#993100 290.5px)"></i><i style="background:linear-gradient(90deg,#009913 0.5px,#00990b 104.5px,#992f00 294.5px,#992600 311.5px)"></i><i style="background:linear-gradient(90deg,#009915 0.5px,#00990e 105.5px,#992500 314.5px,#992000 325.5px)"></i><i style="background:linear-gradient(90deg,#009917 0.5px,#091 105.5px,#991d00 334.5px,#991800 347.5px)"></i><i style="background:linear-gradient(90deg,#009919 0.5px,#009913 106.5px,#991600 354.5px,#991400 362.5px)"></i><i style="background:linear-gradient(90deg,#00991c 0.5px,#009916 106.5px,#991000 374.5px,#990e00 383.5px)"></i><i style="background:linear-gradient(90deg,#00991e 0.5px,#009919 107.5px,#990b00 394.5px,#990b00 397.5px)"></i><i style="background:linear-gradient(90deg,#009920 0.5px,#00991c 107.5px)"></i><i style="background:linear-gradient(90deg,#092 0.5px,#00991f 108.5px)"></i><i style="background:linear-gradient(90deg,#009925 0.5px,#092 108.5px)"></i><i style="background:linear-gradient(90deg,#009927 0.5px,#009925 109.5px)"></i><i style="background:linear-gradient(90deg,#009929 0.5px,#009928 109.5px)"></i><i style="background:linear-gradient(90deg,#00992c 0.5px,#00992b 110.5px,#900 492.5px,#900 502.5px)"></i><i style="background:linear-gradient(90deg,#00992e 0.5px,#00992e 110.5px,#900 490.5px,#900 521.5px)"></i><i style="background:linear-gradient(90deg,#009931 0.5px,#009931 111.5px,#900 487.5px,#900 537.5px)"></i><i style="background:linear-gradient(90deg,#093 0.5px,#009935 111.5px,#900 485.5px,#900 557.5px)"></i><i style="background:linear-gradient(90deg,#009935 0.5px,#009938 112.5px,#990001 483.5px,#900 574.5px)"></i><i style="background:linear-gradient(90deg,#009938 0.5px,#00993b 112.5px,#990002 481.5px,#900 592.5px)"></i><i style="background:linear-gradient(90deg,#00993a 1.5px,#00993f 112.5px,#990003 478.5px,#900 598.5px)"></i><i style="background:linear-gradient(90deg,#00993d 1.5px,#009942 113.5px,#990004 476.5px,#900 598.5px)"></i><i style="background:linear-gradient(90deg,#009940 2.5px,#009945 113.5px,#990005 474.5px,#900 598.5px)"></i><i style="background:linear-gradient(90deg,#009942 2.5px,#009949 114.5px,#990006 471.5px,#990001 598.5px)"></i><i style="background:linear-gradient(90deg,#009945 3.5px,#00994d 114.5px,#990007 469.5px,#990001 598.5px)"></i><i style="background:linear-gradient(90deg,#009947 3.5px,#009950 115.5px,#990008 467.5px,#990002 598.5px)"></i><i style="background:linear-gradient(90deg,#00994a 4.5px,#009954 115.5px,#990009 465.5px,#990002 598.5px)"></i><i style="background:linear-gradient(90deg,#00994d 4.5px,#009958 116.5px,#99000a 462.5px,#990003 598.5px)"></i><i style="background:linear-gradient(90deg,#009950 5.5px,#00995c 116.5px,#99000b 460.5px,#990004 598.5px)"></i><i style="background:linear-gradient(90deg,#009952 5.5px,#009960 117.5px,#99000c 458.5px,#990004 598.5px)"></i><i style="background:linear-gradient(90deg,#095 6.5px,#009963 117.5px,#99000d 456.5px,#990005 598.5px)"></i><i style="background:linear-gradient(90deg,#009958 6.5px,#009968 118.5px,#99000e 453.5px,#990006 598.5px)"></i><i style="background:linear-gradient(90deg,#00995b 7.5px,#00996c 118.5px,#99000f 451.5px,#990006 598.5px)"></i><i style="background:linear-gradient(90deg,#00995e 8.5px,#009970 119.5px,#990010 449.5px,#990007 598.5px)"></i><i style="background:linear-gradient(90deg,#009961 8.5px,#009974 119.5px,#990012 446.5px,#990007 598.5px)"></i><i style="background:linear-gradient(90deg,#009964 9.5px,#009978 120.5px,#990013 444.5px,#990008 598.5px)"></i><i style="background:linear-gradient(90deg,#009967 9.5px,#00997d 120.5px,#990014 442.5px,#990009 596.5px)"></i><i style="background:linear-gradient(90deg,#00996a 10.5px,#009981 120.5px,#990015 440.5px,#990009 594.5px)"></i><i style="background:linear-gradient(90deg,#00996d 10.5px,#009985 121.5px,#990016 437.5px,#99000a 592.5px)"></i><i style="background:linear-gradient(90deg,#009970 11.5px,#00998a 121.5px,#990018 435.5px,#99000b 590.5px)"></i><i style="background:linear-gradient(90deg,#009973 11.5px,#00998f 122.5px,#990019 433.5px,#99000c 588.5px)"></i><i style="background:linear-gradient(90deg,#097 12.5px,#009993 122.5px,#99001a 431.5px,#99000c 586.5px)"></i><i style="background:linear-gradient(90deg,#00997a 13.5px,#009998 123.5px,#99001b 428.5px,#99000d 584.5px)"></i><i style="background:linear-gradient(90deg,#00997d 13.5px,#099 112.5px,#009599 123.5px,#99001d 426.5px,#99000e 582.5px)"></i><i style="background:linear-gradient(90deg,#009981 14.5px,#099 100.5px,#009099 124.5px,#99001e 424.5px,#99000f 580.5px)"></i><i style="background:linear-gradient(90deg,#009984 15.5px,#099 88.5px,#008c99 124.5px,#99001f 422.5px,#990010 578.5px)"></i><i style="background:linear-gradient(90deg,#098 16.5px,#099 76.5px,#089 125.5px,#990021 419.5px,#990010 576.5px)"></i><i style="background:linear-gradient(90deg,#00998b 17.5px,#099 64.5px,#008499 125.5px,#902 417.5px,#901 574.5px)"></i><i style="background:linear-gradient(90deg,#00998f 18.5px,#099 53.5px,#008099 126.5px,#990024 415.5px,#990012 573.5px)"></i><i style="background:linear-gradient(90deg,#009992 18.5px,#099 41.5px,#007c99 126.5px,#990025 412.5px,#990013 571.5px)"></i><i style="background:linear-gradient(90deg,#009996 19.5px,#007899 127.5px,#990027 410.5px,#990013 569.5px)"></i><i style="background:linear-gradient(90deg,#009899 20.5px,#007599 127.5px,#990028 408.5px,#990014 567.5px)"></i><i style="background:linear-gradient(90deg,#009499 20.5px,#007299 128.5px,#99002a 406.5px,#990015 565.5px)"></i><i style="background:linear-gradient(90deg,#009199 21.5px,#006f99 128.5px,#99002c 403.5px,#990016 563.5px)"></i><i style="background:linear-gradient(90deg,#008d99 22.5px,#006c99 128.5px,#99002d 401.5px,#990017 561.5px)"></i><i style="background:linear-gradient(90deg,#008a99 23.5px,#006899 129.5px,#99002f 399.5px,#990018 559.5px)"></i><i style="background:linear-gradient(90deg,#008799 23.5px,#069 129.5px,#990030 397.5px,#990019 557.5px)"></i><i style="background:linear-gradient(90deg,#008499 24.5px,#006399 130.5px,#990032 394.5px,#990024 465.5px,#99001a 555.5px)"></i><i style="background:linear-gradient(90deg,#008099 25.5px,#006099 130.5px,#990034 392.5px,#990026 463.5px,#99001a 553.5px)"></i><i style="background:linear-gradient(90deg,#007d99 26.5px,#005e99 131.5px,#990036 390.5px,#990027 460.5px,#99001b 551.5px)"></i><i style="background:linear-gradient(90deg,#007b99 27.5px,#005b99 131.5px,#990038 388.5px,#990028 458.5px,#99001c 549.5px)"></i><i style="background:linear-gradient(90deg,#007899 27.5px,#005999 132.5px,#99003a 385.5px,#99002a 456.5px,#99001d 547.5px)"></i><i style="background:linear-gradient(90deg,#007599 28.5px,#005699 132.5px,#99003c 383.5px,#99002b 454.5px,#99001e 545.5px)"></i><i style="background:linear-gradient(90deg,#007299 29.5px,#005499 133.5px,#99003e 381.5px,#99002c 451.5px,#99001f 543.5px)"></i><i style="background:linear-gradient(90deg,#007099 30.5px,#005299 133.5px,#990040 378.5px,#99002e 449.5px,#990020 541.5px)"></i><i style="background:linear-gradient(90deg,#006d99 31.5px,#005099 134.5px,#990042 376.5px,#99002f 447.5px,#990021 540.5px)"></i><i style="background:linear-gradient(90deg,#006b99 32.5px,#004e99 134.5px,#904 374.5px,#990031 445.5px,#902 538.5px)"></i><i style="background:linear-gradient(90deg,#006899 33.5px,#004c99 135.5px,#990046 372.5px,#990032 443.5px,#990023 536.5px)"></i><i style="background:linear-gradient(90deg,#069 34.5px,#004a99 135.5px,#990048 369.5px,#990034 440.5px,#990024 534.5px)"></i><i style="background:linear-gradient(90deg,#006499 35.5px,#004899 136.5px,#99004b 367.5px,#990035 438.5px,#990025 532.5px)"></i><i style="background:linear-gradient(90deg,#006299 36.5px,#004699 136.5px,#99004d 365.5px,#990037 436.5px,#990026 530.5px)"></i><i style="background:linear-gradient(90deg,#005f99 37.5px,#049 136.5px,#99004f 363.5px,#990038 434.5px,#990027 528.5px)"></i><i style="background:linear-gradient(90deg,#005d99 38.5px,#004399 137.5px,#990052 360.5px,#99003a 431.5px,#990028 526.5px)"></i><i style="background:linear-gradient(90deg,#005b99 39.5px,#004199 137.5px,#990054 358.5px,#99003c 429.5px,#990029 524.5px)"></i><i style="background:linear-gradient(90deg,#005999 39.5px,#003f99 138.5px,#990057 356.5px,#99003d 427.5px,#99002a 522.5px)"></i><i style="background:linear-gradient(90deg,#005899 40.5px,#003e99 138.5px,#99005a 353.5px,#99003f 424.5px,#99002b 520.5px)"></i><i style="background:linear-gradient(90deg,#005699 41.5px,#003c99 139.5px,#99005c 351.5px,#990041 422.5px,#99002c 518.5px)"></i><i style="background:linear-gradient(90deg,#005499 42.5px,#003b99 139.5px,#99005f 349.5px,#990043 420.5px,#99002e 516.5px)"></i><i style="background:linear-gradient(90deg,#005299 43.5px,#003999 140.5px,#990062 347.5px,#904 418.5px,#99002f 514.5px)"></i><i style="background:linear-gradient(90deg,#005099 44.5px,#003899 140.5px,#990065 344.5px,#990046 415.5px,#990030 512.5px)"></i><i style="background:linear-gradient(90deg,#004e99 45.5px,#003699 141.5px,#990068 342.5px,#990048 413.5px,#990031 510.5px)"></i><i style="background:linear-gradient(90deg,#004d99 46.5px,#003599 141.5px,#99006b 340.5px,#99004a 411.5px,#990032 508.5px)"></i><i style="background:linear-gradient(90deg,#004b99 47.5px,#039 142.5px,#99006e 338.5px,#99004c 409.5px,#903 507.5px)"></i><i style="background:linear-gradient(90deg,#004999 48.5px,#003299 142.5px,#990071 335.5px,#99004e 406.5px,#990035 505.5px)"></i><i style="background:linear-gradient(90deg,#004899 49.5px,#003199 143.5px,#990074 333.5px,#990050 404.5px,#990036 503.5px)"></i><i style="background:linear-gradient(90deg,#004699 50.5px,#003099 143.5px,#990078 331.5px,#990063 364.5px,#990052 402.5px,#990037 501.5px)"></i><i style="background:linear-gradient(90deg,#004599 51.5px,#002e99 144.5px,#99007b 329.5px,#906 362.5px,#990054 400.5px,#990038 499.5px)"></i><i style="background:linear-gradient(90deg,#004399 52.5px,#002d99 144.5px,#99007f 326.5px,#990069 358.5px,#990056 397.5px,#99003a 497.5px)"></i><i style="background:linear-gradient(90deg,#004299 53.5px,#002c99 144.5px,#990083 324.5px,#99006c 356.5px,#990059 395.5px,#99003b 495.5px)"></i><i style="background:linear-gradient(90deg,#004099 54.5px,#002b99 145.5px,#990086 322.5px,#99006f 354.5px,#99005b 393.5px,#99003c 493.5px)"></i><i style="background:linear-gradient(90deg,#003f99 55.5px,#002a99 145.5px,#99008b 319.5px,#990072 351.5px,#99005d 390.5px,#99003e 491.5px)"></i><i style="background:linear-gradient(90deg,#003d99 56.5px,#002999 146.5px,#99008f 317.5px,#990075 349.5px,#990060 388.5px,#99003f 489.5px)"></i><i style="background:linear-gradient(90deg,#003c99 57.5px,#002899 146.5px,#990093 315.5px,#990078 347.5px,#990062 386.5px,#990050 432.5px,#990040 487.5px)"></i><i style="background:linear-gradient(90deg,#003b99 58.5px,#002799 147.5px,#990097 313.5px,#99007c 345.5px,#990065 383.5px,#990052 429.5px,#990042 485.5px)"></i><i style="background:linear-gradient(90deg,#003a99 59.5px,#002699 147.5px,#960099 310.5px,#99007a 350.5px,#990065 385.5px,#990052 430.5px,#990043 483.5px)"></i><i style="background:linear-gradient(90deg,#003899 60.5px,#002499 148.5px,#920099 308.5px,#990098 316.5px,#99007c 349.5px,#990065 388.5px,#904 481.5px)"></i><i style="background:linear-gradient(90deg,#003799 62.5px,#002499 148.5px,#8e0099 306.5px,#990098 318.5px,#99007c 352.5px,#990064 392.5px,#990046 479.5px)"></i><i style="background:linear-gradient(90deg,#003699 63.5px,#002399 149.5px,#8a0099 304.5px,#990098 320.5px,#99007f 350.5px,#990069 385.5px,#990047 477.5px)"></i><i style="background:linear-gradient(90deg,#003499 64.5px,#029 149.5px,#850099 301.5px,#990098 322.5px,#990080 351.5px,#99006a 386.5px,#990049 475.5px)"></i><i style="background:linear-gradient(90deg,#039 65.5px,#002199 150.5px,#810099 299.5px,#990098 324.5px,#990080 353.5px,#99006b 387.5px,#99004a 474.5px)"></i><i style="background:linear-gradient(90deg,#003299 66.5px,#002099 150.5px,#7e0099 297.5px,#990098 326.5px,#990080 355.5px,#99006c 388.5px,#99004c 472.5px)"></i><i style="background:linear-gradient(90deg,#003199 67.5px,#001f99 151.5px,#7a0099 295.5px,#990098 328.5px,#990081 356.5px,#99006d 388.5px,#99004d 470.5px)"></i><i style="background:linear-gradient(90deg,#003099 68.5px,#001e99 151.5px,#760099 292.5px,#990098 330.5px,#990082 357.5px,#99006e 389.5px,#99004f 468.5px)"></i><i style="background:linear-gradient(90deg,#002f99 69.5px,#001d99 152.5px,#720099 290.5px,#990098 332.5px,#99006f 390.5px,#990050 466.5px)"></i><i style="background:linear-gradient(90deg,#002e99 70.5px,#001c99 152.5px,#6f0099 288.5px,#909 333.5px,#990070 390.5px,#990052 464.5px)"></i><i style="background:linear-gradient(90deg,#002d99 71.5px,#001c99 152.5px,#6b0099 285.5px,#909 335.5px,#990072 390.5px,#990054 462.5px)"></i><i style="background:linear-gradient(90deg,#002b99 72.5px,#001b99 153.5px,#680099 283.5px,#909 337.5px,#990073 391.5px,#905 460.5px)"></i><i style="background:linear-gradient(90deg,#002a99 73.5px,#001a99 153.5px,#650099 281.5px,#909 339.5px,#990074 391.5px,#990057 458.5px)"></i><i style="background:linear-gradient(90deg,#002999 74.5px,#001999 154.5px,#620099 279.5px,#909 341.5px,#990075 392.5px,#990059 456.5px)"></i><i style="background:linear-gradient(90deg,#002899 76.5px,#001899 154.5px,#5e0099 276.5px,#909 343.5px,#990076 392.5px,#99005b 454.5px)"></i><i style="background:linear-gradient(90deg,#002799 77.5px,#001899 155.5px,#5b0099 274.5px,#909 345.5px,#907 393.5px,#99005c 452.5px)"></i><i style="background:linear-gradient(90deg,#002699 79.5px,#001799 155.5px,#580099 272.5px,#909 347.5px,#990078 393.5px,#99005e 450.5px)"></i><i style="background:linear-gradient(90deg,#002599 80.5px,#001699 156.5px,#560099 270.5px,#909 349.5px,#990079 394.5px,#990060 448.5px)"></i><i style="background:linear-gradient(90deg,#002499 81.5px,#001699 156.5px,#520099 267.5px,#909 351.5px,#99007b 394.5px,#990062 446.5px)"></i><i style="background:linear-gradient(90deg,#002399 82.5px,#001599 157.5px,#500099 265.5px,#909 353.5px,#99007b 395.5px,#990064 444.5px)"></i><i style="background:linear-gradient(90deg,#002399 83.5px,#001499 157.5px,#4d0099 263.5px,#909 355.5px,#99007d 395.5px,#906 442.5px)"></i><i style="background:linear-gradient(90deg,#029 84.5px,#001399 158.5px,#4a0099 260.5px,#909 357.5px,#99007e 396.5px,#990067 441.5px)"></i><i style="background:linear-gradient(90deg,#002199 85.5px,#001399 158.5px,#470099 258.5px,#909 359.5px,#99007f 396.5px,#990069 439.5px)"></i><i style="background:linear-gradient(90deg,#002099 87.5px,#001299 159.5px,#450099 256.5px,#909 361.5px,#990080 397.5px,#99006b 437.5px)"></i><i style="background:linear-gradient(90deg,#001f99 88.5px,#019 159.5px,#430099 254.5px,#909 363.5px,#990081 397.5px,#99006d 435.5px)"></i><i style="background:linear-gradient(90deg,#001e99 89.5px,#019 160.5px,#3f0099 251.5px,#909 365.5px,#99006f 433.5px)"></i><i style="background:linear-gradient(90deg,#001d99 90.5px,#001099 160.5px,#3d0099 249.5px,#909 367.5px,#990072 431.5px)"></i><i style="background:linear-gradient(90deg,#001c99 92.5px,#001099 160.5px,#3b0099 247.5px,#909 369.5px,#990074 429.5px)"></i><i style="background:linear-gradient(90deg,#001c99 93.5px,#000f99 161.5px,#390099 245.5px,#909 371.5px,#990076 427.5px)"></i><i style="background:linear-gradient(90deg,#001b99 94.5px,#000f99 161.5px,#360099 242.5px,#909 373.5px,#990078 425.5px)"></i><i style="background:linear-gradient(90deg,#001a99 95.5px,#000e99 162.5px,#340099 240.5px,#909 375.5px,#99007a 423.5px)"></i><i style="background:linear-gradient(90deg,#001999 97.5px,#000d99 162.5px,#320099 238.5px,#909 377.5px,#99007d 421.5px)"></i><i style="background:linear-gradient(90deg,#001899 98.5px,#000d99 163.5px,#300099 236.5px,#909 379.5px,#99007f 419.5px)"></i><i style="background:linear-gradient(90deg,#001899 99.5px,#000c99 163.5px,#2d0099 233.5px,#909 381.5px,#990082 417.5px)"></i><i style="background:linear-gradient(90deg,#001799 100.5px,#000c99 164.5px,#2b0099 231.5px,#909 383.5px,#990084 415.5px)"></i><i style="background:linear-gradient(90deg,#001699 101.5px,#000b99 164.5px,#290099 229.5px,#909 385.5px,#990086 413.5px)"></i><i style="background:linear-gradient(90deg,#001599 103.5px,#000a99 165.5px,#270099 226.5px,#909 387.5px,#990089 411.5px)"></i><i style="background:linear-gradient(90deg,#001599 104.5px,#000a99 165.5px,#250099 224.5px,#909 389.5px,#99008c 409.5px)"></i><i style="background:linear-gradient(90deg,#001499 105.5px,#000999 166.5px,#230099 222.5px,#909 391.5px,#99008e 408.5px)"></i><i style="background:linear-gradient(90deg,#001399 106.5px,#000999 166.5px,#210099 220.5px,#909 393.5px,#990090 406.5px)"></i><i style="background:linear-gradient(90deg,#001399 108.5px,#000899 167.5px,#1f0099 217.5px,#909 395.5px,#990093 404.5px)"></i><i style="background:linear-gradient(90deg,#001299 109.5px,#000899 167.5px,#1d0099 215.5px,#909 397.5px,#990096 402.5px)"></i><i style="background:linear-gradient(90deg,#019 111.5px,#000799 168.5px,#1c0099 213.5px,#909 400.5px)"></i><i style="background:linear-gradient(90deg,#001099 112.5px,#000799 168.5px,#1a0099 211.5px,#960099 398.5px)"></i><i style="background:linear-gradient(90deg,#001099 113.5px,#000799 168.5px,#180099 208.5px,#940099 396.5px)"></i><i style="background:linear-gradient(90deg,#000f99 115.5px,#000699 169.5px,#160099 206.5px,#910099 394.5px)"></i><i style="background:linear-gradient(90deg,#000f99 116.5px,#000699 169.5px,#150099 204.5px,#8e0099 392.5px)"></i><i style="background:linear-gradient(90deg,#000e99 117.5px,#000599 170.5px,#120099 201.5px,#8c0099 390.5px)"></i><i style="background:linear-gradient(90deg,#000d99 119.5px,#000599 170.5px,#109 199.5px,#890099 388.5px)"></i><i style="background:linear-gradient(90deg,#000d99 120.5px,#000499 171.5px,#0f0099 197.5px,#860099 386.5px)"></i><i style="background:linear-gradient(90deg,#000c99 122.5px,#000499 171.5px,#0e0099 195.5px,#840099 384.5px)"></i><i style="background:linear-gradient(90deg,#000b99 123.5px,#000399 172.5px,#0c0099 192.5px,#810099 382.5px)"></i><i style="background:linear-gradient(90deg,#000b99 125.5px,#000399 172.5px,#0b0099 190.5px,#7f0099 380.5px)"></i><i style="background:linear-gradient(90deg,#000a99 126.5px,#010399 173.5px,#090099 188.5px,#7c0099 378.5px)"></i><i style="background:linear-gradient(90deg,#000a99 127.5px,#000299 173.5px,#080099 186.5px,#7a0099 376.5px)"></i><i style="background:linear-gradient(90deg,#000999 129.5px,#010299 174.5px,#060099 183.5px,#780099 375.5px)"></i><i style="background:linear-gradient(90deg,#000899 130.5px,#010199 174.5px,#050099 181.5px,#760099 373.5px)"></i><i style="background:linear-gradient(90deg,#000899 131.5px,#010199 175.5px,#030099 179.5px,#740099 371.5px)"></i><i style="background:linear-gradient(90deg,#000799 133.5px,#010199 175.5px,#020099 177.5px,#710099 369.5px)"></i><i style="background:linear-gradient(90deg,#000799 134.5px,#010099 176.5px,#009 174.5px,#6f0099 367.5px)"></i><i style="background:linear-gradient(90deg,#000699 136.5px,#010099 176.5px,#009 172.5px,#6d0099 365.5px)"></i><i style="background:linear-gradient(90deg,#000699 137.5px,#009 175.5px,#6b0099 363.5px)"></i><i style="background:linear-gradient(90deg,#000599 139.5px,#009 175.5px,#690099 361.5px)"></i><i style="background:linear-gradient(90deg,#000499 140.5px,#009 176.5px,#670099 359.5px)"></i><i style="background:linear-gradient(90deg,#000499 142.5px,#009 176.5px,#650099 357.5px)"></i><i style="background:linear-gradient(90deg,#000399 143.5px,#009 176.5px,#630099 355.5px)"></i><i style="background:linear-gradient(90deg,#000399 145.5px,#009 177.5px,#610099 353.5px)"></i><i style="background:linear-gradient(90deg,#000299 146.5px,#009 177.5px,#5f0099 351.5px)"></i><i style="background:linear-gradient(90deg,#000299 148.5px,#009 177.5px,#5d0099 349.5px)"></i><i style="background:linear-gradient(90deg,#000199 150.5px,#009 177.5px,#5b0099 347.5px)"></i><i style="background:linear-gradient(90deg,#000199 152.5px,#009 178.5px,#590099 345.5px)"></i><i style="background:linear-gradient(90deg,#009 154.5px,#009 178.5px,#570099 343.5px)"></i><i style="background:linear-gradient(90deg,#009 155.5px,#009 178.5px,#560099 342.5px)"></i><i style="background:linear-gradient(90deg,#009 157.5px,#009 179.5px,#540099 340.5px)"></i><i style="background:linear-gradient(90deg,#009 158.5px,#009 179.5px,#520099 338.5px)"></i><i style="background:linear-gradient(90deg,#009 160.5px,#009 179.5px,#510099 336.5px)"></i><i style="background:linear-gradient(90deg,#009 161.5px,#009 180.5px,#4f0099 334.5px)"></i><i style="background:linear-gradient(90deg,#009 163.5px,#009 180.5px,#4d0099 332.5px)"></i><i style="background:linear-gradient(90deg,#009 165.5px,#009 180.5px,#4b0099 330.5px)"></i><i style="background:linear-gradient(90deg,#009 167.5px,#009 181.5px,#4a0099 328.5px)"></i><i style="background:linear-gradient(90deg,#009 169.5px,#009 181.5px,#480099 326.5px)"></i><i style="background:linear-gradient(90deg,#009 171.5px,#009 181.5px,#470099 324.5px)"></i><i style="background:linear-gradient(90deg,#009 173.5px,#009 182.5px,#450099 322.5px)"></i><i style="background:linear-gradient(90deg,#009 175.5px,#009 182.5px,#430099 320.5px)"></i><i style="background:linear-gradient(90deg,#009 177.5px,#420099 318.5px)"></i><i style="background:linear-gradient(90deg,#009 179.5px,#400099 316.5px)"></i><i style="background:linear-gradient(90deg,#009 180.5px,#3f0099 314.5px)"></i><i style="background:linear-gradient(90deg,#009 182.5px,#3d0099 312.5px)"></i><i style="background:linear-gradient(90deg,#010099 185.5px,#3c0099 310.5px)"></i><i style="background:linear-gradient(90deg,#020099 187.5px,#3b0099 309.5px)"></i><i style="background:linear-gradient(90deg,#020099 189.5px,#390099 307.5px)"></i><i style="background:linear-gradient(90deg,#030099 191.5px,#380099 305.5px)"></i><i style="background:linear-gradient(90deg,#040099 193.5px,#360099 303.5px)"></i><i style="background:linear-gradient(90deg,#050099 196.5px,#350099 301.5px)"></i><i style="background:linear-gradient(90deg,#060099 198.5px,#340099 299.5px)"></i><i style="background:linear-gradient(90deg,#060099 200.5px,#320099 297.5px)"></i><i style="background:linear-gradient(90deg,#080099 203.5px,#310099 295.5px)"></i><i style="background:linear-gradient(90deg,#090099 206.5px,#300099 293.5px)"></i><i style="background:linear-gradient(90deg,#090099 207.5px,#2e0099 291.5px)"></i><i style="background:linear-gradient(90deg,#0a0099 210.5px,#2d0099 289.5px)"></i><i style="background:linear-gradient(90deg,#0b0099 212.5px,#2c0099 287.5px)"></i><i style="background:linear-gradient(90deg,#0c0099 215.5px,#2b0099 285.5px)"></i><i style="background:linear-gradient(90deg,#0c0099 217.5px,#290099 283.5px)"></i><i style="background:linear-gradient(90deg,#0e0099 220.5px,#280099 281.5px)"></i><i style="background:linear-gradient(90deg,#0e0099 222.5px,#270099 279.5px)"></i><i style="background:linear-gradient(90deg,#0f0099 224.5px,#260099 277.5px)"></i><i style="background:linear-gradient(90deg,#100099 227.5px,#250099 276.5px)"></i><i style="background:linear-gradient(90deg,#109 230.5px,#240099 274.5px)"></i><i style="background:linear-gradient(90deg,#120099 232.5px,#209 272.5px)"></i><i style="background:linear-gradient(90deg,#120099 234.5px,#210099 270.5px)"></i><i style="background:linear-gradient(90deg,#130099 237.5px,#200099 268.5px)"></i><i style="background:linear-gradient(90deg,#140099 239.5px,#1f0099 266.5px)"></i><i style="background:linear-gradient(90deg,#140099 241.5px,#1e0099 264.5px)"></i><i style="background:linear-gradient(90deg,#150099 244.5px,#1d0099 262.5px)"></i><i style="background:linear-gradient(90deg,#160099 246.5px,#1c0099 260.5px)"></i><i style="background:linear-gradient(90deg,#170099 250.5px,#190099 255.5px)"></i></div><div class="cl" style="clip-path:polygon(495.5px 56px,98px 15.9px,174.8px 338.8px);padding-top:14px"><i style="background:linear-gradient(90deg,#0f0 96.5px,#0f0 100.5px)"></i><i style="background:linear-gradient(90deg,#0f0 96.5px,#0f0 120.5px)"></i><i style="background:linear-gradient(90deg,#0f0 97.5px,#0f0 122.5px,#2dff00 140.5px)"></i><i style="background:linear-gradient(90deg,#0f0 97.5px,#01ff00 123.5px,#65ff00 160.5px)"></i><i style="background:linear-gradient(90deg,#0f0 98.5px,#0f0 123.5px,#4dff00 152.5px,#a2ff00 179.5px)"></i><i style="background:linear-gradient(90deg,#0f0 98.5px,#02ff00 124.5px,#39ff00 145.5px,#71ff00 164.5px,#acff00 182.5px,#ecff00 199.5px)"></i><i style="background:linear-gradient(90deg,#00ff02 99.5px,#01ff00 124.5px,#3bff00 146.5px,#7f0 166.5px,#b7ff00 185.5px,#fdff00 203.5px,#ffca00 219.5px)"></i><i style="background:linear-gradient(90deg,#00ff06 99.5px,#00ff01 124.5px,#3bff00 146.5px,#7f0 166.5px,#b8ff00 185.5px,#fdff00 203.5px,#ffc600 220.5px,#f90 239.5px)"></i><i style="background:linear-gradient(90deg,#00ff0a 100.5px,#02ff05 125.5px,#3aff01 146.5px,#7f0 166.5px,#b8ff00 185.5px,#feff00 203.5px,#ffd400 215.5px,#ffb100 228.5px,#ff9300 242.5px,#f70 259.5px)"></i><i style="background:linear-gradient(90deg,#00ff0f 100.5px,#01ff0a 125.5px,#39ff06 146.5px,#76ff01 166.5px,#b8ff00 185.5px,#ff0 203.5px,#ffca00 218.5px,#ffa000 235.5px,#ff7c00 255.5px,#ff5d00 279.5px)"></i><i style="background:linear-gradient(90deg,#00ff13 100.5px,#00ff0f 125.5px,#39ff0b 146.5px,#76ff07 166.5px,#b5ff02 184.5px,#fffe00 203.5px,#ffc400 220.5px,#ff9300 241.5px,#ff6b00 267.5px,#ff4a00 298.5px)"></i><i style="background:linear-gradient(90deg,#00ff17 101.5px,#02ff14 126.5px,#3bff10 147.5px,#76ff0c 166.5px,#b5ff08 184.5px,#fffe03 203.5px,#ffdc00 212.5px,#fb0 223.5px,#ff9e00 235.5px,#ff8600 248.5px,#ff5c00 279.5px,#ff3a00 318.5px)"></i><i style="background:linear-gradient(90deg,#00ff1c 101.5px,#01ff19 126.5px,#3bff15 147.5px,#76ff12 166.5px,#b1ff0e 183.5px,#fffd09 203.5px,#ffd706 213.5px,#ffb502 225.5px,#ff9500 239.5px,#ff7b00 254.5px,#ff4f00 291.5px,#ff2d00 338.5px)"></i><i style="background:linear-gradient(90deg,#00ff21 102.5px,#00ff1d 126.5px,#37ff1b 146.5px,#72ff17 165.5px,#aeff14 182.5px,#fffc0f 203.5px,#ffd00a 215.5px,#ffac06 228.5px,#ff8d03 243.5px,#ff7200 260.5px,#ff5900 280.5px,#ff4500 302.5px,#ff2300 358.5px)"></i><i style="background:linear-gradient(90deg,#00ff25 102.5px,#02ff22 127.5px,#3dff20 148.5px,#79ff1d 167.5px,#b9ff1a 185.5px,#ffff16 202.5px,#ffcf10 215.5px,#ffa90b 229.5px,#ff8806 245.5px,#ff6b02 264.5px,#ff5200 286.5px,#ff3d00 312.5px,#ff1900 378.5px)"></i><i style="background:linear-gradient(90deg,#00ff2a 103.5px,#01ff27 127.5px,#3cff25 148.5px,#79ff22 167.5px,#baff20 185.5px,#ffff1d 202.5px,#ffce15 215.5px,#ffa40f 231.5px,#ff8109 249.5px,#ff6305 270.5px,#ff4901 295.5px,#ff3400 324.5px,#ff1200 398.5px)"></i><i style="background:linear-gradient(90deg,#00ff2f 103.5px,#00ff2d 127.5px,#39ff2b 147.5px,#75ff28 166.5px,#b2ff26 183.5px,#fffe23 202.5px,#ffca1a 216.5px,#ffa013 232.5px,#ff7b0c 252.5px,#ff5c07 275.5px,#ff4302 302.5px,#ff2d00 335.5px,#ff0b00 418.5px)"></i><i style="background:linear-gradient(90deg,#00ff34 104.5px,#02ff32 128.5px,#3bff30 148.5px,#75ff2e 166.5px,#b3ff2c 183.5px,#fffd2a 202.5px,#ffc61f 217.5px,#ff9b16 234.5px,#ff760f 255.5px,#ff5709 279.5px,#ff3d04 309.5px,#ff2700 344.5px,#ff1500 386.5px,#ff0500 437.5px)"></i><i style="background:linear-gradient(90deg,#00ff39 104.5px,#01ff37 128.5px,#3aff36 148.5px,#75ff34 166.5px,#afff33 182.5px,#fffc30 202.5px,#ffc624 217.5px,#ff981b 235.5px,#ff7212 257.5px,#ff510b 284.5px,#ff3706 316.5px,#ff2101 355.5px,#ff0f00 401.5px,#f00 457.5px)"></i><i style="background:linear-gradient(90deg,#00ff3d 105.5px,#00ff3c 128.5px,#37ff3b 147.5px,#71ff3a 165.5px,#b7ff39 184.5px,#feff38 201.5px,#fffb37 202.5px,#ffc229 218.5px,#ff911e 238.5px,#ff6b15 261.5px,#ff4b0d 290.5px,#ff2f06 327.5px,#ff1901 373.5px,#ff0200 446.5px,#f00 477.5px)"></i><i style="background:linear-gradient(90deg,#00ff43 105.5px,#02ff42 129.5px,#3cff41 149.5px,#78ff40 167.5px,#b7ff3f 184.5px,#ffff3f 201.5px,#ffde36 209.5px,#ffc12f 218.5px,#ff9022 238.5px,#ff6717 264.5px,#ff460f 295.5px,#ff2807 338.5px,#ff1101 391.5px,#f00 453.5px,#f00 497.5px)"></i><i style="background:linear-gradient(90deg,#00ff48 106.5px,#01ff47 129.5px,#3cff47 149.5px,#78ff47 167.5px,#b7ff46 184.5px,#fffe45 201.5px,#ffde3c 209.5px,#ffc034 218.5px,#ff8f26 238.5px,#ff661b 264.5px,#ff4512 295.5px,#ff2809 338.5px,#ff1103 391.5px,#f00 451.5px,#f00 496.5px)"></i><i style="background:linear-gradient(90deg,#00ff4d 106.5px,#00ff4d 129.5px,#38ff4d 148.5px,#74ff4d 166.5px,#b0ff4d 182.5px,#fffd4c 201.5px,#ffdd42 209.5px,#ffbf39 218.5px,#ff8e2b 238.5px,#ff661f 263.5px,#ff4515 294.5px,#ff280c 337.5px,#ff1105 390.5px,#f00 449.5px,#f00 494.5px)"></i><i style="background:linear-gradient(90deg,#00ff52 107.5px,#02ff52 130.5px,#3bff53 149.5px,#74ff53 166.5px,#b0ff54 182.5px,#fffc53 201.5px,#ffdc49 209.5px,#ffbe3f 218.5px,#ff8e2f 238.5px,#ff6522 263.5px,#ff4518 293.5px,#ff280f 335.5px,#ff1107 388.5px,#ff0002 447.5px,#f00 491.5px)"></i><i style="background:linear-gradient(90deg,#00ff57 107.5px,#01ff58 130.5px,#3aff59 149.5px,#74ff5a 166.5px,#b8ff5b 184.5px,#feff5b 200.5px,#fffb5a 201.5px,#ffdb4f 209.5px,#ffbd45 218.5px,#ff8d34 238.5px,#ff6526 263.5px,#ff451b 293.5px,#ff2811 335.5px,#ff1109 387.5px,#ff0003 445.5px,#f00 489.5px)"></i><i style="background:linear-gradient(90deg,#00ff5d 108.5px,#01ff5e 130.5px,#3aff5f 149.5px,#77ff60 167.5px,#b9ff62 184.5px,#ffff63 200.5px,#ffde57 208.5px,#ffc24c 216.5px,#ff903a 236.5px,#ff662b 261.5px,#ff461f 291.5px,#ff2814 333.5px,#ff110b 385.5px,#ff0005 443.5px,#ff0002 487.5px)"></i><i style="background:linear-gradient(90deg,#00ff62 108.5px,#02ff64 131.5px,#3cff65 150.5px,#77ff67 167.5px,#b5ff69 183.5px,#fffe6a 200.5px,#ffdd5d 208.5px,#ffc152 216.5px,#ff8f3f 236.5px,#ff672f 260.5px,#ff4622 290.5px,#ff2816 331.5px,#ff110d 383.5px,#ff0007 441.5px,#ff0003 485.5px)"></i><i style="background:linear-gradient(90deg,#00ff68 108.5px,#02ff6a 131.5px,#3cff6c 150.5px,#77ff6e 167.5px,#b5ff70 183.5px,#fffd72 200.5px,#ffdc64 208.5px,#ffc058 216.5px,#ff8e43 236.5px,#f63 260.5px,#ff4525 290.5px,#ff2819 331.5px,#ff110f 382.5px,#ff0008 439.5px,#ff0005 482.5px)"></i><i style="background:linear-gradient(90deg,#00ff6e 109.5px,#01ff70 131.5px,#38ff72 149.5px,#73ff74 166.5px,#adff77 181.5px,#fffd79 200.5px,#ffdb6a 208.5px,#ffbf5e 216.5px,#ff8f49 235.5px,#ff6637 259.5px,#ff4528 289.5px,#ff281c 330.5px,#f11 381.5px,#ff000a 437.5px,#ff0006 480.5px)"></i><i style="background:linear-gradient(90deg,#00ff73 109.5px,#03ff76 132.5px,#3aff79 150.5px,#72ff7b 166.5px,#b6ff7f 183.5px,#feff82 199.5px,#fffc80 200.5px,#ffda71 208.5px,#ffbe64 216.5px,#ff8e4e 235.5px,#ff663b 259.5px,#ff452c 288.5px,#ff281e 328.5px,#ff1114 379.5px,#ff000c 435.5px,#ff0008 478.5px)"></i><i style="background:linear-gradient(90deg,#00ff79 110.5px,#02ff7c 132.5px,#3dff80 151.5px,#7aff83 168.5px,#baff86 184.5px,#feff8a 199.5px,#ffdd79 207.5px,#ffc16c 215.5px,#ff8f54 234.5px,#ff663f 258.5px,#ff452f 287.5px,#ff2821 327.5px,#ff1116 377.5px,#ff000e 434.5px,#ff0009 475.5px)"></i><i style="background:linear-gradient(90deg,#00ff7f 110.5px,#01ff83 132.5px,#39ff86 150.5px,#76ff8a 167.5px,#b6ff8e 183.5px,#ffff92 199.5px,#ffdc80 207.5px,#ffc072 215.5px,#ff8e58 234.5px,#ff6744 257.5px,#ff4633 286.5px,#ff2924 325.5px,#ff1118 375.5px,#ff000f 432.5px,#ff000b 473.5px)"></i><i style="background:linear-gradient(90deg,#00ff85 111.5px,#03ff89 133.5px,#3cff8d 151.5px,#75ff91 167.5px,#b2ff95 182.5px,#fffe9a 199.5px,#ffdf89 206.5px,#ffc27a 214.5px,#ff8f5e 233.5px,#ff6749 256.5px,#ff4637 285.5px,#ff2927 324.5px,#ff111a 374.5px,#f01 430.5px,#ff000d 471.5px)"></i><i style="background:linear-gradient(90deg,#00ff8b 111.5px,#02ff90 133.5px,#3bff94 151.5px,#75ff98 167.5px,#b2ff9d 182.5px,#fffda2 199.5px,#ffde90 206.5px,#ffc180 214.5px,#ff8e64 233.5px,#ff664d 256.5px,#ff453a 285.5px,#ff282a 324.5px,#ff111d 373.5px,#ff0013 428.5px,#ff000e 469.5px)"></i><i style="background:linear-gradient(90deg,#00ff91 112.5px,#01ff96 133.5px,#37ff9b 150.5px,#71ffa0 166.5px,#aaffa4 180.5px,#fdffab 198.5px,#fffcaa 199.5px,#ffdd97 206.5px,#ffc086 214.5px,#ff8e69 233.5px,#ff6551 256.5px,#ff453e 284.5px,#ff282d 323.5px,#ff111f 371.5px,#ff0015 426.5px,#ff0010 466.5px)"></i><i style="background:linear-gradient(90deg,#00ff98 112.5px,#00ff9d 133.5px,#37ffa2 150.5px,#71ffa7 166.5px,#b7ffae 183.5px,#feffb4 198.5px,#fffbb2 199.5px,#ffdc9e 206.5px,#ffbf8d 214.5px,#ff8f6f 232.5px,#ff6656 255.5px,#ff4542 283.5px,#ff2830 322.5px,#ff1121 370.5px,#ff0017 424.5px,#ff0012 464.5px)"></i><i style="background:linear-gradient(90deg,#00ff9e 113.5px,#02ffa4 134.5px,#3dffaa 152.5px,#79ffb0 168.5px,#b8ffb6 183.5px,#ffffbd 198.5px,#ffdfa8 205.5px,#ffc195 213.5px,#ff9076 231.5px,#ff665b 254.5px,#ff4546 282.5px,#ff2833 320.5px,#ff1124 368.5px,#ff0019 422.5px,#ff0013 462.5px)"></i><i style="background:linear-gradient(90deg,#00ffa5 113.5px,#01ffab 134.5px,#3cffb1 152.5px,#78ffb8 168.5px,#b8ffbe 183.5px,#fffec5 198.5px,#ffdeb0 205.5px,#ffc09c 213.5px,#ff8f7b 231.5px,#ff6760 253.5px,#ff454a 281.5px,#ff2836 319.5px,#ff1126 367.5px,#ff001b 420.5px,#ff0015 460.5px)"></i><i style="background:linear-gradient(90deg,#00ffab 114.5px,#00ffb2 134.5px,#38ffb8 151.5px,#74ffbf 167.5px,#afffc6 181.5px,#fffdce 198.5px,#ffddb7 205.5px,#ffbfa2 213.5px,#ff8e80 231.5px,#ff6664 253.5px,#ff464e 280.5px,#ff2839 318.5px,#ff1129 365.5px,#ff001d 418.5px,#ff0017 457.5px)"></i><i style="background:linear-gradient(90deg,#00ffb2 114.5px,#02ffb9 135.5px,#38ffc0 151.5px,#74ffc7 167.5px,#afffcf 181.5px,#fffcd6 198.5px,#ffdcbf 205.5px,#ffbea9 213.5px,#ff8d85 231.5px,#ff6569 253.5px,#ff4551 280.5px,#ff283c 317.5px,#ff112b 364.5px,#ff001f 416.5px,#ff0019 455.5px)"></i><i style="background:linear-gradient(90deg,#00ffb9 115.5px,#01ffc1 135.5px,#37ffc8 151.5px,#74ffd0 167.5px,#b4ffd8 182.5px,#feffe2 197.5px,#fffbdf 198.5px,#ffc0b2 212.5px,#ff8e8d 230.5px,#ff666e 252.5px,#ff4555 279.5px,#ff283f 316.5px,#ff102e 363.5px,#ff0021 414.5px,#ff001b 453.5px)"></i><i style="background:linear-gradient(90deg,#00ffc0 115.5px,#00ffc8 135.5px,#3affd0 152.5px,#78ffd8 168.5px,#b9ffe2 183.5px,#ffffeb 197.5px,#ffc3bc 211.5px,#ff8f94 229.5px,#ff6674 251.5px,#ff465a 277.5px,#ff2944 313.5px,#ff1131 359.5px,#ff0023 412.5px,#ff001d 450.5px)"></i><i style="background:linear-gradient(90deg,#00ffc7 116.5px,#02ffd0 136.5px,#39ffd8 152.5px,#77ffe1 168.5px,#b5ffea 182.5px,#fffef4 197.5px,#ffddd9 204.5px,#ffc2c3 211.5px,#ff8e99 229.5px,#ff6578 251.5px,#ff455e 277.5px,#ff2846 313.5px,#f13 359.5px,#ff0026 410.5px,#ff001e 448.5px)"></i><i style="background:linear-gradient(90deg,#00ffce 116.5px,#01ffd7 136.5px,#38ffe0 152.5px,#77ffea 168.5px,#b5fff3 182.5px,#fffdfd 197.5px,#ffdce1 204.5px,#ffc1ca 211.5px,#ff90a1 228.5px,#ff677f 249.5px,#ff4562 276.5px,#ff284a 312.5px,#ff1136 357.5px,#ff0028 408.5px,#ff0020 446.5px)"></i><i style="background:linear-gradient(90deg,#00ffd5 116.5px,#00ffdf 136.5px,#62ffef 163.5px,#c4ffff 185.5px,#fff2fe 199.5px,#ffb9cb 213.5px,#ff88a1 231.5px,#ff6280 252.5px,#ff4264 278.5px,#ff264b 314.5px,#ff1038 359.5px,#ff002a 406.5px,#f02 444.5px)"></i><i style="background:linear-gradient(90deg,#00ffdc 117.5px,#02ffe7 137.5px,#46fff3 156.5px,#8cffff 173.5px,#ffe7fe 201.5px,#ffb1cd 215.5px,#ff84a4 232.5px,#ff5f83 253.5px,#ff4167 279.5px,#ff254e 315.5px,#ff0f3a 359.5px,#ff002c 404.5px,#ff0024 441.5px)"></i><i style="background:linear-gradient(90deg,#00ffe4 117.5px,#01ffef 137.5px,#59ffff 161.5px,#ffddfe 203.5px,#ffaace 217.5px,#ff7da4 235.5px,#ff5a83 256.5px,#ff3e69 281.5px,#ff2350 316.5px,#ff0e3c 360.5px,#ff002f 402.5px,#ff0026 439.5px)"></i><i style="background:linear-gradient(90deg,#00ffec 118.5px,#00fff7 137.5px,#2affff 149.5px,#8aecff 175.5px,#ffd3fe 205.5px,#ffa3cf 219.5px,#ff78a5 237.5px,#ff5785 258.5px,#ff3b6a 283.5px,#ff2152 318.5px,#ff0d3d 362.5px,#ff0031 400.5px,#ff0028 437.5px)"></i><i style="background:linear-gradient(90deg,#00fff3 118.5px,#03feff 138.5px,#77e7ff 171.5px,#ffcafe 207.5px,#ff9cd0 221.5px,#ff73a7 239.5px,#ff5387 260.5px,#ff386c 285.5px,#ff2053 320.5px,#ff0c3f 363.5px,#ff0034 398.5px,#ff002a 435.5px)"></i><i style="background:linear-gradient(90deg,#00fffb 119.5px,#01f6ff 138.5px,#76deff 172.5px,#ffc1fe 209.5px,#ff93ce 224.5px,#ff6fa8 241.5px,#ff518a 261.5px,#ff376f 286.5px,#ff1f56 320.5px,#ff0b41 363.5px,#ff0036 396.5px,#ff002d 432.5px)"></i><i style="background:linear-gradient(90deg,#00fbff 119.5px,#0ef 138.5px,#76d6ff 173.5px,#ffb9fe 211.5px,#ff8fd2 225.5px,#ff6eae 241.5px,#ff508e 261.5px,#ff3874 284.5px,#ff1f5a 318.5px,#ff0b45 360.5px,#ff0039 394.5px,#ff002f 430.5px)"></i><i style="background:linear-gradient(90deg,#00f3ff 120.5px,#02e7ff 139.5px,#79ceff 175.5px,#ffb1fe 213.5px,#ff89d2 227.5px,#ff69af 243.5px,#ff4e91 262.5px,#ff3676 285.5px,#ff1e5c 319.5px,#ff0a46 361.5px,#ff003b 393.5px,#ff0031 428.5px)"></i><i style="background:linear-gradient(90deg,#00ecff 120.5px,#01e0ff 139.5px,#78c6ff 176.5px,#ffa9fe 215.5px,#ff83d3 229.5px,#ff65b0 245.5px,#ff4a92 264.5px,#ff3378 287.5px,#ff1c5e 321.5px,#ff0948 363.5px,#ff003d 391.5px,#f03 426.5px)"></i><i style="background:linear-gradient(90deg,#00e4ff 121.5px,#00d9ff 139.5px,#78bfff 177.5px,#ffa2fe 217.5px,#ff7ed4 231.5px,#ff60b1 247.5px,#ff4794 266.5px,#ff327b 288.5px,#ff1b60 321.5px,#ff094b 362.5px,#ff0040 389.5px,#ff0036 423.5px)"></i><i style="background:linear-gradient(90deg,#00deff 121.5px,#02d2ff 140.5px,#7ab8ff 179.5px,#ff9bfe 219.5px,#ff79d5 233.5px,#ff5cb3 249.5px,#ff4596 267.5px,#ff307d 289.5px,#ff1a62 322.5px,#ff084c 363.5px,#ff0043 387.5px,#ff0038 421.5px)"></i><i style="background:linear-gradient(90deg,#00d7ff 122.5px,#01ccff 140.5px,#7ab2ff 180.5px,#ff94fe 221.5px,#ff75d8 234.5px,#ff5ab6 250.5px,#ff4399 268.5px,#ff2e7f 290.5px,#ff1965 323.5px,#ff074e 364.5px,#ff0046 385.5px,#ff003a 419.5px)"></i><i style="background:linear-gradient(90deg,#00d1ff 122.5px,#00c6ff 140.5px,#79acff 181.5px,#ff8dfe 223.5px,#ff70d9 236.5px,#ff56b7 252.5px,#ff409a 270.5px,#ff2d82 291.5px,#ff1767 324.5px,#ff0751 363.5px,#ff0048 383.5px,#ff003d 416.5px)"></i><i style="background:linear-gradient(90deg,#00cbff 123.5px,#02c0ff 141.5px,#79a6ff 182.5px,#ff87fe 225.5px,#ff6bda 238.5px,#ff52b8 254.5px,#ff3d9c 272.5px,#ff2a83 293.5px,#ff1668 326.5px,#ff0552 365.5px,#ff004b 381.5px,#ff003f 414.5px)"></i><i style="background:linear-gradient(90deg,#00c5ff 123.5px,#01bbff 141.5px,#78a0ff 183.5px,#ff81fe 227.5px,#ff67da 240.5px,#ff4eb9 256.5px,#ff3a9d 274.5px,#ff2986 294.5px,#ff146a 327.5px,#ff0454 366.5px,#ff004e 379.5px,#ff0042 412.5px)"></i><i style="background:linear-gradient(90deg,#00c0ff 124.5px,#01b6ff 141.5px,#7b9aff 185.5px,#ff7bfe 229.5px,#ff62db 242.5px,#ff4cbc 257.5px,#ff38a0 275.5px,#ff2788 295.5px,#ff136c 328.5px,#ff0356 367.5px,#f04 410.5px)"></i><i style="background:linear-gradient(90deg,#0bf 124.5px,#02b0ff 142.5px,#7a95ff 186.5px,#ff76fe 231.5px,#ff5edb 244.5px,#ff48bd 259.5px,#ff36a2 276.5px,#ff268a 296.5px,#ff126f 328.5px,#ff0358 367.5px,#ff0047 407.5px)"></i><i style="background:linear-gradient(90deg,#00b6ff 124.5px,#01abff 142.5px,#7a90ff 187.5px,#ff71fe 233.5px,#ff59dc 246.5px,#ff45be 261.5px,#ff33a3 278.5px,#ff248d 297.5px,#ff1171 329.5px,#ff025a 368.5px,#ff004a 405.5px)"></i><i style="background:linear-gradient(90deg,#00b0ff 125.5px,#01a7ff 142.5px,#798bff 188.5px,#ff6bfe 235.5px,#f5d 248.5px,#ff43c0 262.5px,#ff31a6 279.5px,#ff228f 298.5px,#ff1073 330.5px,#ff015b 369.5px,#ff004d 403.5px)"></i><i style="background:linear-gradient(90deg,#00acff 125.5px,#02a2ff 143.5px,#7c85ff 190.5px,#ff66fe 237.5px,#ff51dd 250.5px,#ff3fc1 264.5px,#ff30a8 280.5px,#ff2191 299.5px,#ff0f75 331.5px,#ff005e 369.5px,#ff004f 401.5px)"></i><i style="background:linear-gradient(90deg,#00a7ff 126.5px,#019dff 143.5px,#7b81ff 191.5px,#ff62ff 239.5px,#ff4dde 252.5px,#ff3cc2 266.5px,#ff1f93 300.5px,#ff0e78 331.5px,#ff0061 367.5px,#ff0052 398.5px)"></i><i style="background:linear-gradient(90deg,#00a3ff 126.5px,#0199ff 143.5px,#7b7cff 192.5px,#ff5dff 241.5px,#ff4be0 253.5px,#ff3ac5 267.5px,#ff1e97 300.5px,#ff0e7b 330.5px,#ff0064 365.5px,#f05 396.5px)"></i><i style="background:linear-gradient(90deg,#009eff 127.5px,#0295ff 144.5px,#7d78ff 194.5px,#ff58ff 243.5px,#ff47e1 255.5px,#ff37c5 269.5px,#ff1d99 301.5px,#ff0e7f 329.5px,#ff0068 363.5px,#ff0058 394.5px)"></i><i style="background:linear-gradient(90deg,#009aff 127.5px,#0191ff 144.5px,#7c74ff 195.5px,#ff54ff 245.5px,#ff44e1 257.5px,#ff35c8 270.5px,#ff1b9b 302.5px,#ff0d81 329.5px,#ff006b 361.5px,#ff005b 392.5px)"></i><i style="background:linear-gradient(90deg,#0096ff 128.5px,#018dff 144.5px,#7c70ff 196.5px,#ff50ff 247.5px,#ff32c9 272.5px,#ff1a9d 303.5px,#ff0c84 329.5px,#ff006f 359.5px,#ff005e 389.5px)"></i><i style="background:linear-gradient(90deg,#0092ff 128.5px,#008aff 144.5px,#7b6cff 197.5px,#ff4cff 249.5px,#ff2fc9 274.5px,#ff199f 304.5px,#ff0b87 329.5px,#ff0072 357.5px,#ff0061 387.5px)"></i><i style="background:linear-gradient(90deg,#008eff 129.5px,#0186ff 145.5px,#7b68ff 198.5px,#ff48ff 251.5px,#ff2dcc 275.5px,#ff17a2 305.5px,#ff0076 355.5px,#ff0065 385.5px)"></i><i style="background:linear-gradient(90deg,#008bff 129.5px,#0182ff 145.5px,#7b65ff 199.5px,#f4f 253.5px,#ff2bce 276.5px,#ff16a5 305.5px,#ff007a 353.5px,#ff0068 382.5px)"></i><i style="background:linear-gradient(90deg,#0087ff 130.5px,#007fff 145.5px,#7a61ff 200.5px,#ff41ff 255.5px,#ff29cf 278.5px,#ff15a7 306.5px,#ff007e 351.5px,#ff006b 380.5px)"></i><i style="background:linear-gradient(90deg,#0084ff 130.5px,#017bff 146.5px,#7c5dff 202.5px,#ff3dff 257.5px,#ff26cf 280.5px,#ff13a9 307.5px,#ff0082 349.5px,#ff006f 378.5px)"></i><i style="background:linear-gradient(90deg,#0080ff 131.5px,#0178ff 146.5px,#7c5aff 203.5px,#ff39ff 259.5px,#ff24d2 281.5px,#ff12ac 307.5px,#ff0086 347.5px,#ff0072 376.5px)"></i><i style="background:linear-gradient(90deg,#007dff 131.5px,#0076ff 146.5px,#7b57ff 204.5px,#ff36ff 261.5px,#ff22d4 282.5px,#ff11ae 308.5px,#ff008a 345.5px,#ff0076 373.5px)"></i><i style="background:linear-gradient(90deg,#007aff 132.5px,#0172ff 147.5px,#7d53ff 206.5px,#f3f 263.5px,#ff20d5 284.5px,#ff10b2 308.5px,#ff008e 343.5px,#ff007a 371.5px)"></i><i style="background:linear-gradient(90deg,#07f 132.5px,#016fff 147.5px,#7d50ff 207.5px,#ff30ff 265.5px,#ff1ed7 285.5px,#ff0fb4 309.5px,#ff0093 341.5px,#ff007d 369.5px)"></i><i style="background:linear-gradient(90deg,#0074ff 132.5px,#006dff 147.5px,#7c4dff 208.5px,#ff2dff 267.5px,#ff1cd9 286.5px,#ff0eb7 309.5px,#ff0096 340.5px,#ff0081 367.5px)"></i><i style="background:linear-gradient(90deg,#0071ff 133.5px,#016aff 148.5px,#7e4aff 210.5px,#ff2aff 269.5px,#ff1ada 288.5px,#ff0db9 310.5px,#ff009b 338.5px,#ff0085 364.5px)"></i><i style="background:linear-gradient(90deg,#006eff 133.5px,#0167ff 148.5px,#7e47ff 211.5px,#ff27ff 271.5px,#ff18dc 289.5px,#ff0cbc 310.5px,#ff009f 336.5px,#ff0089 362.5px)"></i><i style="background:linear-gradient(90deg,#006bff 134.5px,#0065ff 148.5px,#7d45ff 212.5px,#ff24ff 273.5px,#ff16dc 291.5px,#ff0abe 311.5px,#ff00a4 334.5px,#ff008d 360.5px)"></i><i style="background:linear-gradient(90deg,#0069ff 134.5px,#0162ff 149.5px,#7d42ff 213.5px,#ff21ff 275.5px,#ff14de 292.5px,#ff09c2 311.5px,#ff00a9 332.5px,#ff0092 357.5px)"></i><i style="background:linear-gradient(90deg,#06f 135.5px,#015fff 149.5px,#7d40ff 214.5px,#ff1eff 277.5px,#ff13e0 293.5px,#ff09c5 311.5px,#ff00ae 330.5px,#ff0096 355.5px)"></i><i style="background:linear-gradient(90deg,#0064ff 135.5px,#005dff 149.5px,#7c3dff 215.5px,#ff1cff 279.5px,#ff11e1 295.5px,#ff07c7 312.5px,#ff00b3 328.5px,#ff009b 353.5px)"></i><i style="background:linear-gradient(90deg,#0061ff 136.5px,#015aff 150.5px,#7e3aff 217.5px,#ff19ff 281.5px,#ff06ca 312.5px,#ff00b8 326.5px,#ff009f 351.5px)"></i><i style="background:linear-gradient(90deg,#005fff 136.5px,#0158ff 150.5px,#7d38ff 218.5px,#ff17ff 283.5px,#ff05ce 312.5px,#ff00be 324.5px,#ff00a4 348.5px)"></i><i style="background:linear-gradient(90deg,#005cff 137.5px,#0056ff 150.5px,#7d36ff 219.5px,#ff14ff 285.5px,#ff04cf 313.5px,#ff00a9 346.5px)"></i><i style="background:linear-gradient(90deg,#005aff 137.5px,#0154ff 151.5px,#7d34ff 220.5px,#ff12ff 287.5px,#ff00c9 320.5px,#ff00ae 344.5px)"></i><i style="background:linear-gradient(90deg,#0057ff 138.5px,#0152ff 151.5px,#7c31ff 221.5px,#ff0fff 289.5px,#ff00cf 318.5px,#ff00b2 342.5px)"></i><i style="background:linear-gradient(90deg,#05f 138.5px,#0050ff 151.5px,#7c2fff 222.5px,#ff0dff 291.5px,#ff00d5 316.5px,#ff00b8 339.5px)"></i><i style="background:linear-gradient(90deg,#0053ff 139.5px,#014dff 152.5px,#7e2dff 224.5px,#ff0bff 293.5px,#ff00db 314.5px,#ff00bd 337.5px)"></i><i style="background:linear-gradient(90deg,#0051ff 139.5px,#014cff 152.5px,#7d2bff 225.5px,#ff09ff 295.5px,#ff00e2 312.5px,#ff00c3 335.5px)"></i><i style="background:linear-gradient(90deg,#004fff 140.5px,#004aff 152.5px,#0848ff 157.5px,#8028ff 228.5px,#ff07ff 297.5px,#ff00e8 310.5px,#ff00c8 333.5px)"></i><i style="background:linear-gradient(90deg,#004dff 140.5px,#0048ff 152.5px,#0646ff 156.5px,#8026ff 229.5px,#ff05ff 299.5px,#f0e 309.5px,#ff00cf 330.5px)"></i><i style="background:linear-gradient(90deg,#004bff 140.5px,#0046ff 152.5px,#0445ff 155.5px,#7e25ff 229.5px,#ff03ff 301.5px,#ff00d5 328.5px)"></i><i style="background:linear-gradient(90deg,#0049ff 141.5px,#04f 153.5px,#0b41ff 160.5px,#8322ff 233.5px,#ff01ff 303.5px,#ff00da 326.5px)"></i><i style="background:linear-gradient(90deg,#0047ff 141.5px,#0043ff 153.5px,#0940ff 159.5px,#8120ff 233.5px,#f0f 305.5px,#ff00e2 323.5px)"></i><i style="background:linear-gradient(90deg,#0045ff 142.5px,#0041ff 153.5px,#123cff 165.5px,#851dff 237.5px,#f0f 307.5px,#ff00e8 321.5px)"></i><i style="background:linear-gradient(90deg,#04f 142.5px,#003fff 154.5px,#7d1eff 233.5px,#eb00ff 298.5px,#f0f 309.5px,#f0e 319.5px)"></i><i style="background:linear-gradient(90deg,#0042ff 143.5px,#013dff 155.5px,#711fff 227.5px,#e400ff 296.5px,#f0f 311.5px,#ff00f5 317.5px)"></i><i style="background:linear-gradient(90deg,#0040ff 143.5px,#003cff 154.5px,#0d38ff 163.5px,#741dff 230.5px,#de00ff 294.5px,#ff00fe 314.5px)"></i><i style="background:linear-gradient(90deg,#003eff 144.5px,#003aff 155.5px,#1634ff 170.5px,#761bff 232.5px,#d700ff 292.5px,#fa00ff 312.5px)"></i><i style="background:linear-gradient(90deg,#003dff 144.5px,#0039ff 155.5px,#1034ff 166.5px,#6f1bff 229.5px,#d100ff 290.5px,#f300ff 310.5px)"></i><i style="background:linear-gradient(90deg,#003bff 145.5px,#0037ff 155.5px,#13f 167.5px,#cb00ff 288.5px,#ec00ff 308.5px)"></i><i style="background:linear-gradient(90deg,#003aff 145.5px,#0035ff 156.5px,#0933ff 162.5px,#c500ff 286.5px,#e400ff 305.5px)"></i><i style="background:linear-gradient(90deg,#0038ff 146.5px,#0034ff 156.5px,#0a31ff 163.5px,#c100ff 285.5px,#de00ff 303.5px)"></i><i style="background:linear-gradient(90deg,#0037ff 146.5px,#0232ff 158.5px,#b0f 283.5px,#d800ff 301.5px)"></i><i style="background:linear-gradient(90deg,#0035ff 147.5px,#0032ff 156.5px,#0530ff 160.5px,#b600ff 281.5px,#d200ff 299.5px)"></i><i style="background:linear-gradient(90deg,#0034ff 147.5px,#0030ff 157.5px,#b000ff 279.5px,#ca00ff 296.5px)"></i><i style="background:linear-gradient(90deg,#0032ff 148.5px,#012eff 158.5px,#ab00ff 277.5px,#c500ff 294.5px)"></i><i style="background:linear-gradient(90deg,#0031ff 148.5px,#002dff 158.5px,#a600ff 275.5px,#bf00ff 292.5px)"></i><i style="background:linear-gradient(90deg,#0030ff 148.5px,#002cff 158.5px,#a100ff 273.5px,#b800ff 289.5px)"></i><i style="background:linear-gradient(90deg,#002eff 149.5px,#012aff 159.5px,#9c00ff 271.5px,#b300ff 287.5px)"></i><i style="background:linear-gradient(90deg,#002dff 149.5px,#0029ff 159.5px,#9700ff 269.5px,#ae00ff 285.5px)"></i><i style="background:linear-gradient(90deg,#002bff 150.5px,#0028ff 159.5px,#9200ff 267.5px,#a900ff 283.5px)"></i><i style="background:linear-gradient(90deg,#002aff 150.5px,#0127ff 160.5px,#8d00ff 265.5px,#a200ff 280.5px)"></i><i style="background:linear-gradient(90deg,#0029ff 151.5px,#0126ff 160.5px,#8900ff 263.5px,#9e00ff 278.5px)"></i><i style="background:linear-gradient(90deg,#0028ff 151.5px,#0025ff 160.5px,#8400ff 261.5px,#90f 276.5px)"></i><i style="background:linear-gradient(90deg,#0026ff 152.5px,#0123ff 161.5px,#8000ff 259.5px,#9400ff 274.5px)"></i><i style="background:linear-gradient(90deg,#0025ff 152.5px,#0122ff 161.5px,#7c00ff 257.5px,#8e00ff 271.5px)"></i><i style="background:linear-gradient(90deg,#0024ff 153.5px,#0021ff 161.5px,#70f 255.5px,#8a00ff 269.5px)"></i><i style="background:linear-gradient(90deg,#0023ff 153.5px,#0120ff 162.5px,#7300ff 253.5px,#8600ff 267.5px)"></i><i style="background:linear-gradient(90deg,#02f 154.5px,#011fff 162.5px,#6f00ff 251.5px,#8000ff 264.5px)"></i><i style="background:linear-gradient(90deg,#0021ff 154.5px,#001eff 162.5px,#6b00ff 249.5px,#7c00ff 262.5px)"></i><i style="background:linear-gradient(90deg,#001fff 155.5px,#011dff 163.5px,#6700ff 247.5px,#7800ff 260.5px)"></i><i style="background:linear-gradient(90deg,#001eff 155.5px,#011cff 163.5px,#6400ff 245.5px,#7400ff 258.5px)"></i><i style="background:linear-gradient(90deg,#001dff 156.5px,#001bff 163.5px,#6000ff 243.5px,#6f00ff 255.5px)"></i><i style="background:linear-gradient(90deg,#001cff 156.5px,#011aff 164.5px,#5c00ff 241.5px,#6b00ff 253.5px)"></i><i style="background:linear-gradient(90deg,#001bff 156.5px,#0119ff 164.5px,#5900ff 239.5px,#6700ff 251.5px)"></i><i style="background:linear-gradient(90deg,#001aff 157.5px,#0018ff 164.5px,#50f 237.5px,#6400ff 249.5px)"></i><i style="background:linear-gradient(90deg,#0019ff 157.5px,#0117ff 165.5px,#5f00ff 246.5px)"></i><i style="background:linear-gradient(90deg,#0018ff 158.5px,#0116ff 165.5px,#5b00ff 244.5px)"></i><i style="background:linear-gradient(90deg,#0017ff 158.5px,#0015ff 165.5px,#5800ff 242.5px)"></i><i style="background:linear-gradient(90deg,#0016ff 159.5px,#0114ff 166.5px,#5400ff 240.5px)"></i><i style="background:linear-gradient(90deg,#0016ff 159.5px,#0113ff 166.5px,#5000ff 237.5px)"></i><i style="background:linear-gradient(90deg,#0014ff 160.5px,#0013ff 166.5px,#4d00ff 235.5px)"></i><i style="background:linear-gradient(90deg,#0014ff 160.5px,#0112ff 167.5px,#4900ff 233.5px)"></i><i style="background:linear-gradient(90deg,#0013ff 161.5px,#0111ff 167.5px,#4500ff 230.5px)"></i><i style="background:linear-gradient(90deg,#0012ff 161.5px,#0010ff 167.5px,#4200ff 228.5px)"></i><i style="background:linear-gradient(90deg,#01f 162.5px,#000fff 167.5px,#3f00ff 226.5px)"></i><i style="background:linear-gradient(90deg,#0010ff 162.5px,#010eff 168.5px,#3c00ff 224.5px)"></i><i style="background:linear-gradient(90deg,#000fff 163.5px,#000eff 168.5px,#3800ff 221.5px)"></i><i style="background:linear-gradient(90deg,#000fff 163.5px,#000dff 168.5px,#3500ff 219.5px)"></i><i style="background:linear-gradient(90deg,#000eff 164.5px,#010cff 169.5px,#3200ff 217.5px)"></i><i style="background:linear-gradient(90deg,#000dff 164.5px,#000bff 169.5px,#2f00ff 215.5px)"></i><i style="background:linear-gradient(90deg,#000cff 164.5px,#000bff 169.5px,#2c00ff 212.5px)"></i><i style="background:linear-gradient(90deg,#000bff 165.5px,#010aff 170.5px,#2900ff 210.5px)"></i><i style="background:linear-gradient(90deg,#000bff 165.5px,#0009ff 170.5px,#2600ff 208.5px)"></i><i style="background:linear-gradient(90deg,#000aff 166.5px,#0009ff 170.5px,#2300ff 205.5px)"></i><i style="background:linear-gradient(90deg,#0009ff 166.5px,#0108ff 171.5px,#2000ff 203.5px)"></i><i style="background:linear-gradient(90deg,#0008ff 167.5px,#0007ff 171.5px,#1e00ff 201.5px)"></i><i style="background:linear-gradient(90deg,#0008ff 167.5px,#0007ff 171.5px,#1b00ff 199.5px)"></i><i style="background:linear-gradient(90deg,#0007ff 168.5px,#1800ff 196.5px)"></i><i style="background:linear-gradient(90deg,#0006ff 168.5px,#1500ff 194.5px)"></i><i style="background:linear-gradient(90deg,#0005ff 169.5px,#1300ff 192.5px)"></i><i style="background:linear-gradient(90deg,#0005ff 169.5px,#10f 190.5px)"></i><i style="background:linear-gradient(90deg,#0004ff 170.5px,#0d00ff 187.5px)"></i><i style="background:linear-gradient(90deg,#0003ff 170.5px,#0b00ff 185.5px)"></i><i style="background:linear-gradient(90deg,#0003ff 171.5px,#0900ff 183.5px)"></i><i style="background:linear-gradient(90deg,#0002ff 171.5px,#0700ff 181.5px)"></i><i style="background:linear-gradient(90deg,#0001ff 172.5px,#0400ff 178.5px)"></i><i style="background:linear-gradient(90deg,#0001ff 172.5px,#0200ff 176.5px)"></i></div></div>
<svg width="1561" height="860" viewBox="0 0 1561 860"><path d="M950.1 518.4v5.6M950.1 518.4h-5.2M1000.08 518.4v5.6M950.1 479.98h-5.2M1050.05 518.4v5.6M950.1 441.57h-5.2M1100.03 518.4v5.6M950.1 403.15h-5.2M1150 518.4v5.6M950.1 364.74h-5.2M1199.97 518.4v5.6M950.1 326.32h-5.2M1249.95 518.4v5.6M950.1 287.91h-5.2M1299.93 518.4v5.6M950.1 249.49h-5.2M1349.9 518.4v5.6M950.1 211.08h-5.2M1399.88 518.4v5.6M950.1 172.66h-5.2M1449.85 518.4v5.6M950.1 134.25h-5.2M1499.83 518.4v5.6M950.1 95.83h-5.2" stroke="#c4c4c4" stroke-width="1.3" fill="none"/><rect x="950.1" y="56.4" width="600.5" height="462" fill="none" stroke="#a4a4a4" stroke-width="1.3"/><g fill="none" stroke="#fff" stroke-width="1.4" stroke-opacity=".88"><rect x="1042.2" y="66.3" width="13.4" height="13.4"/><rect x="1148.3" y="76.1" width="13.4" height="13.4"/><rect x="1126.2" y="90.2" width="13.4" height="13.4"/><rect x="1172.3" y="89.2" width="13.4" height="13.4"/><rect x="1092.2" y="99.2" width="13.4" height="13.4"/><rect x="1124.2" y="112.2" width="13.4" height="13.4"/><rect x="1198.3" y="94.2" width="13.4" height="13.4"/><rect x="1098.3" y="145.2" width="13.4" height="13.4"/><rect x="1064.2" y="162.2" width="13.4" height="13.4"/><rect x="1079.3" y="194.2" width="13.4" height="13.4"/><rect x="1117.2" y="187.1" width="13.4" height="13.4"/><rect x="1136.2" y="191.2" width="13.4" height="13.4"/><rect x="1170.2" y="212.2" width="13.4" height="13.4"/><rect x="1119.3" y="240.3" width="13.4" height="13.4"/><rect x="1121.4" y="291.4" width="13.4" height="13.4"/><rect x="1119.3" y="389.3" width="13.4" height="13.4"/><rect x="1232.3" y="185.2" width="13.4" height="13.4"/><rect x="1268.4" y="258.5" width="13.4" height="13.4"/><rect x="1256.3" y="139.2" width="13.4" height="13.4"/><rect x="1325.4" y="125.1" width="13.4" height="13.4"/><rect x="1439.3" y="106" width="13.4" height="13.4"/><rect x="1242.2" y="99.2" width="13.4" height="13.4"/><rect x="1248.4" y="101.1" width="13.4" height="13.4"/><rect x="1236.5" y="110.2" width="13.4" height="13.4"/><rect x="1212.3" y="107.4" width="13.4" height="13.4"/><rect x="1223.6" y="106.4" width="13.4" height="13.4"/><rect x="1193.4" y="113.4" width="13.4" height="13.4"/><rect x="1210.3" y="115.3" width="13.4" height="13.4"/><rect x="1188.8" y="121.3" width="13.4" height="13.4"/><rect x="1193.4" y="127.3" width="13.4" height="13.4"/><rect x="1175.8" y="124.4" width="13.4" height="13.4"/><rect x="1175.8" y="132.9" width="13.4" height="13.4"/><rect x="1214.2" y="118" width="13.4" height="13.4"/><rect x="1205.3" y="121.1" width="13.4" height="13.4"/><rect x="1201.3" y="117.3" width="13.4" height="13.4"/><rect x="1196.8" y="120.5" width="13.4" height="13.4"/><rect x="1219.3" y="112.3" width="13.4" height="13.4"/></g><g fill="none"><rect x="1140.6" y="150.6" width="12.6" height="12.8" fill="none" stroke="#000" stroke-width="2.2"/><rect x="1142.3" y="152.3" width="9.4" height="9.4" fill="none" stroke="#fff" stroke-opacity=".85"/></g><g stroke="#161616" stroke-width="1.2"><circle cx="1032.4" cy="70.6" r="4.1" fill="#00f000"/><circle cx="1153.3" cy="83.5" r="4.1" fill="#fff000"/><circle cx="1131.3" cy="97.4" r="4.1" fill="#a8b860"/><circle cx="1183.3" cy="96.4" r="4.1" fill="#e0c060"/><circle cx="1091.5" cy="105.4" r="4.1" fill="#6b8f55"/><circle cx="1128.4" cy="116.2" r="4.1" fill="#5f7048"/><circle cx="1212.4" cy="99.4" r="4.1" fill="#d8a050"/><circle cx="1098.4" cy="152.3" r="4.1" fill="#80b0a8"/><circle cx="1055.4" cy="167.4" r="4.1" fill="#00f0ff"/><circle cx="1071.4" cy="202.4" r="4.1" fill="#4f8fa0"/><circle cx="1119.5" cy="193.4" r="4.1" fill="#6a7f9f"/><circle cx="1143.5" cy="195.4" r="4.1" fill="#8888a8"/><circle cx="1181.4" cy="221.5" r="4.1" fill="#5a4468"/><circle cx="1117.4" cy="249.4" r="4.1" fill="#6070a8"/><circle cx="1121.5" cy="306.4" r="4.1" fill="#404880"/><circle cx="1246.5" cy="190.6" r="4.1" fill="#a06898"/><circle cx="1272.5" cy="144.3" r="4.1" fill="#b06070"/><circle cx="1345.6" cy="129.4" r="4.1" fill="#a04040"/><circle cx="1444.5" cy="112.5" r="4.1" fill="#ff0000"/><circle cx="1211.1" cy="125" r="4.1" fill="#e8a888"/><circle cx="1229.6" cy="121.1" r="4.1" fill="#d09080"/><circle cx="1209.6" cy="132.3" r="4.1" fill="#7a5040"/><circle cx="1229" cy="112.3" r="4.1" fill="#8c6239"/><circle cx="1245.3" cy="112.4" r="4.1" fill="#7a5030"/><circle cx="1254.3" cy="105.4" r="4.1" fill="#cc8040"/><circle cx="1266.1" cy="107.3" r="4.1" fill="#a06030"/><circle cx="1259.6" cy="116.4" r="4.1" fill="#704830"/><circle cx="1204.4" cy="119.2" r="4.1" fill="#c09070"/><circle cx="1223.4" cy="120.4" r="4.1" fill="#cc9070"/><circle cx="1230.5" cy="126.5" r="4.1" fill="#e8a080"/><circle cx="1186.4" cy="141.1" r="4.1" fill="#c09888"/><circle cx="1186.4" cy="136.1" r="4.1" fill="#f0c8b8"/><circle cx="1185.4" cy="129.2" r="4.1" fill="#f0c8a8"/><circle cx="1199.2" cy="128.4" r="4.1" fill="#c89070"/><circle cx="1217.4" cy="128" r="4.1" fill="#cc8868"/><circle cx="1205.7" cy="126.5" r="4.1" fill="#cc9470"/></g><g stroke="#1c1c1c" stroke-width="1.1"><circle cx="1146.6" cy="154.8" r="3.9" fill="#c8c8c8"/><circle cx="1147.4" cy="155.6" r="3.9" fill="#b4b4b4"/><circle cx="1148.3" cy="156.3" r="4" fill="#9c9c9c"/></g><circle cx="1158.8" cy="159.4" r="4.4" fill="#000"/><circle cx="1114.7" cy="412.6" r="3.5" fill="#0000ff" stroke="#0000b0" stroke-width="1.2"/><circle cx="1286.5" cy="255.3" r="3.9" fill="#ff00ff" stroke="#5a1a5a" stroke-width="1.2"/><linearGradient id="ins" x1="0" y1="0" x2="1" y2="1"><stop offset="0" stop-color="#ff8e2a"/><stop offset=".5" stop-color="#ff6522"/><stop offset="1" stop-color="#ff3f20"/></linearGradient><rect x="1358.1" y="356.1" width="186.8" height="122.5" fill="url(#ins)" stroke="#9a9a9a" stroke-width="1.2"/><clipPath id="insc"><rect x="1358.7" y="356.7" width="185.6" height="121.3"/></clipPath><g clip-path="url(#insc)"><g fill="none" stroke="#fff" stroke-width="1.4" stroke-opacity=".85"><rect x="1492.3" y="369.1" width="13.4" height="13.4"/><rect x="1374.2" y="383.1" width="13.4" height="13.4"/><rect x="1444.2" y="410.2" width="13.4" height="13.4"/><rect x="1457.3" y="424.2" width="13.4" height="13.4"/><rect x="1368.7" y="428.1" width="13.4" height="13.4"/><rect x="1377.2" y="442.2" width="13.4" height="13.4"/><rect x="1430.2" y="442.2" width="13.4" height="13.4"/><rect x="1347.3" y="426" width="13.4" height="13.4"/></g><g stroke="#161616" stroke-width="1.2"><ellipse cx="1406.5" cy="393.9" rx="4.4" ry="3.6" fill="#c09868"/><ellipse cx="1481.4" cy="422.6" rx="4.2" ry="4.2" fill="#cc9060"/><ellipse cx="1493" cy="432.7" rx="4" ry="4.2" fill="#c08c68"/><ellipse cx="1360.7" cy="440" rx="4.2" ry="4" fill="#c09070"/><ellipse cx="1399.5" cy="438.4" rx="4.2" ry="4.2" fill="#c08c68"/><ellipse cx="1411.4" cy="452.4" rx="4.2" ry="4.2" fill="#c09070"/><ellipse cx="1470" cy="457.4" rx="3.7" ry="4.2" fill="#f0a888"/><ellipse cx="1383.5" cy="443.6" rx="4.2" ry="4.2" fill="#f0b898"/></g></g><rect x="1311" y="488.4" width="237" height="25" fill="#303030"/></svg>
<span class="t" style="left:1.86px;top:29.96px;font-size:38.8px;transform:scaleX(0.9617);">ColorChecker</span><span class="t" style="left:31px;top:85.67px;font-size:14.8px;transform:scaleX(1.0493);">Display analysis is performed with the X-Rite/</span><span class="t" style="left:31px;top:106.67px;font-size:14.8px;transform:scaleX(1.0419);">Pantone ColorChecker<span style="font-size:8.6px;position:relative;top:-5.2px">®</span> target colors.</span><span class="t" style="left:98.25px;top:147.12px;font-size:19px;transform:scaleX(0.9858);">dE Formula:</span><span class="t" style="left:211.7px;top:150.78px;font-size:15.5px;transform:scaleX(0.9715);">2000</span><span class="t" style="left:134.9px;top:182.92px;font-size:12.5px;color:#d4d4d4;transform:scaleX(1.0725);">DeltaE 2000</span><span class="t" style="left:10.65px;top:520px;font-size:12.4px;color:#d4d4d4;transform:scaleX(1.057);">0</span><span class="t" style="left:52.51px;top:520px;font-size:12.4px;color:#d4d4d4;transform:scaleX(1.057);">2</span><span class="t" style="left:94.37px;top:520px;font-size:12.4px;color:#d4d4d4;transform:scaleX(1.057);">4</span><span class="t" style="left:136.23px;top:520px;font-size:12.4px;color:#d4d4d4;transform:scaleX(1.057);">6</span><span class="t" style="left:178.09px;top:520px;font-size:12.4px;color:#d4d4d4;transform:scaleX(1.057);">8</span><span class="t" style="left:216px;top:520px;font-size:12.4px;color:#d4d4d4;transform:scaleX(1.1017);">10</span><span class="t" style="left:257.86px;top:520px;font-size:12.4px;color:#d4d4d4;transform:scaleX(1.1017);">12</span><span class="t" style="left:299.72px;top:520px;font-size:12.4px;color:#d4d4d4;transform:scaleX(1.1017);">14</span><span class="t" style="left:41.97px;top:559.68px;font-size:26.6px;transform:scaleX(1.0399);">Avg dE2000: 2,12</span><span class="t" style="left:37.97px;top:597.28px;font-size:26.6px;transform:scaleX(1.0604);">Max dE2000: 4,59</span><span class="t" style="left:7.97px;top:642.98px;font-size:26.6px;transform:scaleX(1.0628);">Current Reading</span><span class="t" style="left:8.23px;top:680px;font-size:21.5px;transform:scaleX(1.1036);">x: 0,4573</span><span class="t" style="left:154.93px;top:680px;font-size:21.5px;transform:scaleX(1.1103);">y: 0,382</span><span class="t" style="left:8.23px;top:718.3px;font-size:21.5px;transform:scaleX(1.0986);">fL: 40,25</span><span class="t" style="left:8.23px;top:750.6px;font-size:21.5px;transform:scaleX(1.1435);">cd/m²: 137,92</span><span class="t" style="left:412.15px;top:42.92px;font-size:12.5px;color:#d4d4d4;transform:scaleX(1.073);">Delta L</span><span class="t" style="left:353.2px;top:368.79px;font-size:12.3px;color:#d4d4d4;transform:scaleX(1.0331);">-4</span><span class="t" style="left:353.2px;top:329.24px;font-size:12.3px;color:#d4d4d4;transform:scaleX(1.0331);">-3</span><span class="t" style="left:353.2px;top:289.69px;font-size:12.3px;color:#d4d4d4;transform:scaleX(1.0331);">-2</span><span class="t" style="left:353.2px;top:250.14px;font-size:12.3px;color:#d4d4d4;transform:scaleX(1.0331);">-1</span><span class="t" style="left:357.5px;top:210.59px;font-size:12.3px;color:#d4d4d4;transform:scaleX(1.0228);">0</span><span class="t" style="left:357.5px;top:171.04px;font-size:12.3px;color:#d4d4d4;transform:scaleX(1.0228);">1</span><span class="t" style="left:357.5px;top:131.49px;font-size:12.3px;color:#d4d4d4;transform:scaleX(1.0228);">2</span><span class="t" style="left:357.5px;top:91.94px;font-size:12.3px;color:#d4d4d4;transform:scaleX(1.0228);">3</span><span class="t" style="left:357.5px;top:52.39px;font-size:12.3px;color:#d4d4d4;transform:scaleX(1.0228);">4</span><span class="t" style="left:597.3px;top:42.92px;font-size:12.5px;color:#d4d4d4;transform:scaleX(1.0195);">Delta C</span><span class="t" style="left:538.6px;top:368.79px;font-size:12.3px;color:#d4d4d4;transform:scaleX(1.0331);">-4</span><span class="t" style="left:538.6px;top:329.24px;font-size:12.3px;color:#d4d4d4;transform:scaleX(1.0331);">-3</span><span class="t" style="left:538.6px;top:289.69px;font-size:12.3px;color:#d4d4d4;transform:scaleX(1.0331);">-2</span><span class="t" style="left:538.6px;top:250.14px;font-size:12.3px;color:#d4d4d4;transform:scaleX(1.0331);">-1</span><span class="t" style="left:542.9px;top:210.59px;font-size:12.3px;color:#d4d4d4;transform:scaleX(1.0228);">0</span><span class="t" style="left:542.9px;top:171.04px;font-size:12.3px;color:#d4d4d4;transform:scaleX(1.0228);">1</span><span class="t" style="left:542.9px;top:131.49px;font-size:12.3px;color:#d4d4d4;transform:scaleX(1.0228);">2</span><span class="t" style="left:542.9px;top:91.94px;font-size:12.3px;color:#d4d4d4;transform:scaleX(1.0228);">3</span><span class="t" style="left:542.9px;top:52.39px;font-size:12.3px;color:#d4d4d4;transform:scaleX(1.0228);">4</span><span class="t" style="left:783.05px;top:42.92px;font-size:12.5px;color:#d4d4d4;transform:scaleX(1.0195);">Delta H</span><span class="t" style="left:724px;top:368.79px;font-size:12.3px;color:#d4d4d4;transform:scaleX(1.0331);">-4</span><span class="t" style="left:724px;top:329.24px;font-size:12.3px;color:#d4d4d4;transform:scaleX(1.0331);">-3</span><span class="t" style="left:724px;top:289.69px;font-size:12.3px;color:#d4d4d4;transform:scaleX(1.0331);">-2</span><span class="t" style="left:724px;top:250.14px;font-size:12.3px;color:#d4d4d4;transform:scaleX(1.0331);">-1</span><span class="t" style="left:728.3px;top:210.59px;font-size:12.3px;color:#d4d4d4;transform:scaleX(1.0228);">0</span><span class="t" style="left:728.3px;top:171.04px;font-size:12.3px;color:#d4d4d4;transform:scaleX(1.0228);">1</span><span class="t" style="left:728.3px;top:131.49px;font-size:12.3px;color:#d4d4d4;transform:scaleX(1.0228);">2</span><span class="t" style="left:728.3px;top:91.94px;font-size:12.3px;color:#d4d4d4;transform:scaleX(1.0228);">3</span><span class="t" style="left:728.3px;top:52.39px;font-size:12.3px;color:#d4d4d4;transform:scaleX(1.0228);">4</span><div style="position:absolute;left:347.2px;top:386.2px;width:555px;height:150px;overflow:hidden"><span class="t" style="left:28.3px;top:120.79px;font-size:11px;transform:scaleX(1.0844);">White</span><span class="t" style="left:87.75px;top:120.79px;font-size:11px;transform:scaleX(1.0092);">Gray 80</span><span class="t" style="left:151.7px;top:120.79px;font-size:11px;transform:scaleX(1.0092);">Gray 65</span><span class="t" style="left:215.65px;top:120.79px;font-size:11px;transform:scaleX(1.0092);">Gray 50</span><span class="t" style="left:279.6px;top:120.79px;font-size:11px;transform:scaleX(1.0092);">Gray 35</span><span class="t" style="left:349.55px;top:120.79px;font-size:11px;transform:scaleX(1.0221);">Black</span><span class="t" style="left:403.25px;top:120.79px;font-size:11px;transform:scaleX(1.0066);">Dark Skin</span><span class="t" style="left:466.7px;top:120.79px;font-size:11px;transform:scaleX(1.0142);">Light Skin</span><span class="t" style="left:533.65px;top:120.79px;font-size:11px;transform:scaleX(0.9903);">Blue Sky</span></div><span class="t" style="left:355.4px;top:415.9px;font-size:11.6px;font-weight:700;transform:translate(-50%,-50%) rotate(-90deg) scaleX(0.909);transform-origin:center">Actual</span><span class="t" style="left:355.4px;top:477.8px;font-size:11.6px;font-weight:700;transform:translate(-50%,-50%) rotate(-90deg) scaleX(0.895);transform-origin:center">Target</span><div style="position:absolute;left:297.4px;top:565.2px;width:1260.8px;height:210.8px;overflow:hidden"><span class="t" style="left:170.15px;top:7.79px;font-size:12.3px;transform:scaleX(1.4091);">White</span><span class="t" style="left:155px;top:28.62px;font-size:13.8px;transform:scaleX(1.25);">0,3143</span><span class="t" style="left:155px;top:50.55px;font-size:13.8px;transform:scaleX(1.25);">0,3350</span><span class="t" style="left:155px;top:72.48px;font-size:13.8px;transform:scaleX(1.25);">377,6209</span><span class="t" style="left:155px;top:94.41px;font-size:13.8px;transform:scaleX(1.25);">0,3127</span><span class="t" style="left:155px;top:116.34px;font-size:13.8px;transform:scaleX(1.25);">0,3290</span><span class="t" style="left:155px;top:138.27px;font-size:13.8px;transform:scaleX(1.25);">377,6209</span><span class="t" style="left:155px;top:160.2px;font-size:13.8px;transform:scaleX(1.25);">3,8292</span><span class="t" style="left:155px;top:182.13px;font-size:13.8px;transform:scaleX(1.25);">2,5056</span><span class="t" style="left:246.8px;top:7.79px;font-size:12.3px;transform:scaleX(1.2846);">Gray 80</span><span class="t" style="left:237.8px;top:28.62px;font-size:13.8px;transform:scaleX(1.25);">0,3144</span><span class="t" style="left:237.8px;top:50.55px;font-size:13.8px;transform:scaleX(1.25);">0,3350</span><span class="t" style="left:237.8px;top:72.48px;font-size:13.8px;transform:scaleX(1.25);">300,5621</span><span class="t" style="left:237.8px;top:94.41px;font-size:13.8px;transform:scaleX(1.25);">0,3127</span><span class="t" style="left:237.8px;top:116.34px;font-size:13.8px;transform:scaleX(1.25);">0,3290</span><span class="t" style="left:237.8px;top:138.27px;font-size:13.8px;transform:scaleX(1.25);">300,9697</span><span class="t" style="left:237.8px;top:160.2px;font-size:13.8px;transform:scaleX(1.25);">3,5189</span><span class="t" style="left:237.8px;top:182.13px;font-size:13.8px;transform:scaleX(1.25);">2,4702</span><span class="t" style="left:329.6px;top:7.79px;font-size:12.3px;transform:scaleX(1.2754);">Gray 65</span><span class="t" style="left:320.2px;top:28.62px;font-size:13.8px;transform:scaleX(1.25);">0,3142</span><span class="t" style="left:320.2px;top:50.55px;font-size:13.8px;transform:scaleX(1.25);">0,3337</span><span class="t" style="left:320.2px;top:72.48px;font-size:13.8px;transform:scaleX(1.25);">242,5937</span><span class="t" style="left:320.2px;top:94.41px;font-size:13.8px;transform:scaleX(1.25);">0,3127</span><span class="t" style="left:320.2px;top:116.34px;font-size:13.8px;transform:scaleX(1.25);">0,3290</span><span class="t" style="left:320.2px;top:138.27px;font-size:13.8px;transform:scaleX(1.25);">243,8359</span><span class="t" style="left:320.2px;top:160.2px;font-size:13.8px;transform:scaleX(1.25);">2,5854</span><span class="t" style="left:320.2px;top:182.13px;font-size:13.8px;transform:scaleX(1.25);">1,9775</span><span class="t" style="left:412px;top:7.79px;font-size:12.3px;transform:scaleX(1.2846);">Gray 50</span><span class="t" style="left:403px;top:28.62px;font-size:13.8px;transform:scaleX(1.25);">0,3141</span><span class="t" style="left:403px;top:50.55px;font-size:13.8px;transform:scaleX(1.25);">0,3321</span><span class="t" style="left:403px;top:72.48px;font-size:13.8px;transform:scaleX(1.25);">187,2872</span><span class="t" style="left:403px;top:94.41px;font-size:13.8px;transform:scaleX(1.25);">0,3127</span><span class="t" style="left:403px;top:116.34px;font-size:13.8px;transform:scaleX(1.25);">0,3290</span><span class="t" style="left:403px;top:138.27px;font-size:13.8px;transform:scaleX(1.25);">188,7024</span><span class="t" style="left:403px;top:160.2px;font-size:13.8px;transform:scaleX(1.25);">1,4915</span><span class="t" style="left:403px;top:182.13px;font-size:13.8px;transform:scaleX(1.25);">1,4043</span><span class="t" style="left:494.5px;top:7.79px;font-size:12.3px;transform:scaleX(1.2754);">Gray 35</span><span class="t" style="left:485.4px;top:28.62px;font-size:13.8px;transform:scaleX(1.25);">0,3137</span><span class="t" style="left:485.4px;top:50.55px;font-size:13.8px;transform:scaleX(1.25);">0,3301</span><span class="t" style="left:485.4px;top:72.48px;font-size:13.8px;transform:scaleX(1.25);">131,4917</span><span class="t" style="left:485.4px;top:94.41px;font-size:13.8px;transform:scaleX(1.25);">0,3127</span><span class="t" style="left:485.4px;top:116.34px;font-size:13.8px;transform:scaleX(1.25);">0,3290</span><span class="t" style="left:485.4px;top:138.27px;font-size:13.8px;transform:scaleX(1.25);">131,8299</span><span class="t" style="left:485.4px;top:160.2px;font-size:13.8px;transform:scaleX(1.25);">0,4292</span><span class="t" style="left:485.4px;top:182.13px;font-size:13.8px;transform:scaleX(1.25);">0,6157</span><span class="t" style="left:576.65px;top:7.79px;font-size:12.3px;transform:scaleX(1.2667);">Black</span><span class="t" style="left:567.8px;top:28.62px;font-size:13.8px;transform:scaleX(1.25);">0,3241</span><span class="t" style="left:567.8px;top:50.55px;font-size:13.8px;transform:scaleX(1.25);">0,3207</span><span class="t" style="left:567.8px;top:72.48px;font-size:13.8px;transform:scaleX(1.25);">0,0645</span><span class="t" style="left:567.8px;top:94.41px;font-size:13.8px;transform:scaleX(1.25);">0,3127</span><span class="t" style="left:567.8px;top:116.34px;font-size:13.8px;transform:scaleX(1.25);">0,3290</span><span class="t" style="left:567.8px;top:138.27px;font-size:13.8px;transform:scaleX(1.25);">0,0645</span><span class="t" style="left:567.8px;top:160.2px;font-size:13.8px;transform:scaleX(1.25);">0,0633</span><span class="t" style="left:567.8px;top:182.13px;font-size:13.8px;transform:scaleX(1.25);">2,2918</span><span class="t" style="left:631.6px;top:7.79px;font-size:12.3px;transform:scaleX(1.2792);">Dark Skin</span><span class="t" style="left:630.8px;top:28.62px;font-size:13.8px;transform:scaleX(1.25);">0,4229</span><span class="t" style="left:630.8px;top:50.55px;font-size:13.8px;transform:scaleX(1.25);">0,3622</span><span class="t" style="left:630.8px;top:72.48px;font-size:13.8px;transform:scaleX(1.25);">39,0757</span><span class="t" style="left:630.8px;top:94.41px;font-size:13.8px;transform:scaleX(1.25);">0,4064</span><span class="t" style="left:630.8px;top:116.34px;font-size:13.8px;transform:scaleX(1.25);">0,3615</span><span class="t" style="left:630.8px;top:138.27px;font-size:13.8px;transform:scaleX(1.25);">36,9035</span><span class="t" style="left:630.8px;top:160.2px;font-size:13.8px;transform:scaleX(1.25);">2,5339</span><span class="t" style="left:630.8px;top:182.13px;font-size:13.8px;transform:scaleX(1.25);">10,1012</span><span class="t" style="left:711.7px;top:7.79px;font-size:12.3px;transform:scaleX(1.2848);">Light Skin</span><span class="t" style="left:710.1px;top:28.62px;font-size:13.8px;transform:scaleX(1.25);">0,3830</span><span class="t" style="left:710.1px;top:50.55px;font-size:13.8px;transform:scaleX(1.25);">0,3517</span><span class="t" style="left:710.1px;top:72.48px;font-size:13.8px;transform:scaleX(1.25);">134,9363</span><span class="t" style="left:710.1px;top:94.41px;font-size:13.8px;transform:scaleX(1.25);">0,3787</span><span class="t" style="left:710.1px;top:116.34px;font-size:13.8px;transform:scaleX(1.25);">0,3539</span><span class="t" style="left:710.1px;top:138.27px;font-size:13.8px;transform:scaleX(1.25);">131,7168</span><span class="t" style="left:710.1px;top:160.2px;font-size:13.8px;transform:scaleX(1.25);">1,7696</span><span class="t" style="left:710.1px;top:182.13px;font-size:13.8px;transform:scaleX(1.25);">3,9268</span><span class="t" style="left:793.8px;top:7.79px;font-size:12.3px;transform:scaleX(1.261);">Blue Sky</span><span class="t" style="left:792.2px;top:28.62px;font-size:13.8px;transform:scaleX(1.25);">0,2426</span><span class="t" style="left:792.2px;top:50.55px;font-size:13.8px;transform:scaleX(1.25);">0,2698</span><span class="t" style="left:792.2px;top:72.48px;font-size:13.8px;transform:scaleX(1.25);">72,9384</span><span class="t" style="left:792.2px;top:94.41px;font-size:13.8px;transform:scaleX(1.25);">0,2478</span><span class="t" style="left:792.2px;top:116.34px;font-size:13.8px;transform:scaleX(1.25);">0,2664</span><span class="t" style="left:792.2px;top:138.27px;font-size:13.8px;transform:scaleX(1.25);">72,2048</span><span class="t" style="left:792.2px;top:160.2px;font-size:13.8px;transform:scaleX(1.25);">2,9678</span><span class="t" style="left:792.2px;top:182.13px;font-size:13.8px;transform:scaleX(1.25);">4,9258</span><span class="t" style="left:871.05px;top:7.79px;font-size:12.3px;transform:scaleX(1.2815);">Foliage</span><span class="t" style="left:864.9px;top:28.62px;font-size:13.8px;transform:scaleX(1.25);">0,3392</span><span class="t" style="left:864.9px;top:50.55px;font-size:13.8px;transform:scaleX(1.25);">0,4408</span><span class="t" style="left:864.9px;top:72.48px;font-size:13.8px;transform:scaleX(1.25);">51,4450</span><span class="t" style="left:864.9px;top:94.41px;font-size:13.8px;transform:scaleX(1.25);">0,3388</span><span class="t" style="left:864.9px;top:116.34px;font-size:13.8px;transform:scaleX(1.25);">0,4328</span><span class="t" style="left:864.9px;top:138.27px;font-size:13.8px;transform:scaleX(1.25);">49,7269</span><span class="t" style="left:864.9px;top:160.2px;font-size:13.8px;transform:scaleX(1.25);">1,2192</span><span class="t" style="left:864.9px;top:182.13px;font-size:13.8px;transform:scaleX(1.25);">3,7994</span><span class="t" style="left:938.45px;top:7.79px;font-size:12.3px;transform:scaleX(1.3351);">Blue Flower</span><span class="t" style="left:937.6px;top:28.62px;font-size:13.8px;transform:scaleX(1.25);">0,2692</span><span class="t" style="left:937.6px;top:50.55px;font-size:13.8px;transform:scaleX(1.25);">0,2587</span><span class="t" style="left:937.6px;top:72.48px;font-size:13.8px;transform:scaleX(1.25);">90,3917</span><span class="t" style="left:937.6px;top:94.41px;font-size:13.8px;transform:scaleX(1.25);">0,2673</span><span class="t" style="left:937.6px;top:116.34px;font-size:13.8px;transform:scaleX(1.25);">0,2539</span><span class="t" style="left:937.6px;top:138.27px;font-size:13.8px;transform:scaleX(1.25);">88,8463</span><span class="t" style="left:937.6px;top:160.2px;font-size:13.8px;transform:scaleX(1.25);">0,8868</span><span class="t" style="left:937.6px;top:182.13px;font-size:13.8px;transform:scaleX(1.25);">2,1243</span><span class="t" style="left:1035.7px;top:7.79px;font-size:12.3px;transform:scaleX(1.3109);">Bluish Green</span><span class="t" style="left:1034.9px;top:28.62px;font-size:13.8px;transform:scaleX(1.25);">0,2543</span><span class="t" style="left:1034.9px;top:50.55px;font-size:13.8px;transform:scaleX(1.25);">0,3597</span><span class="t" style="left:1034.9px;top:72.48px;font-size:13.8px;transform:scaleX(1.25);">157,7403</span><span class="t" style="left:1034.9px;top:94.41px;font-size:13.8px;transform:scaleX(1.25);">0,2613</span><span class="t" style="left:1034.9px;top:116.34px;font-size:13.8px;transform:scaleX(1.25);">0,3558</span><span class="t" style="left:1034.9px;top:138.27px;font-size:13.8px;transform:scaleX(1.25);">160,0679</span><span class="t" style="left:1034.9px;top:160.2px;font-size:13.8px;transform:scaleX(1.25);">1,7266</span><span class="t" style="left:1034.9px;top:182.13px;font-size:13.8px;transform:scaleX(1.25);">5,2595</span><span class="t" style="left:1149.4px;top:7.79px;font-size:12.3px;transform:scaleX(1.2966);">Orange</span><span class="t" style="left:1138.8px;top:28.62px;font-size:13.8px;transform:scaleX(1.25);">0,5226</span><span class="t" style="left:1138.8px;top:50.55px;font-size:13.8px;transform:scaleX(1.25);">0,4080</span><span class="t" style="left:1138.8px;top:72.48px;font-size:13.8px;transform:scaleX(1.25);">116,2646</span><span class="t" style="left:1138.8px;top:94.41px;font-size:13.8px;transform:scaleX(1.25);">0,5140</span><span class="t" style="left:1138.8px;top:116.34px;font-size:13.8px;transform:scaleX(1.25);">0,4089</span><span class="t" style="left:1138.8px;top:138.27px;font-size:13.8px;transform:scaleX(1.25);">108,7259</span><span class="t" style="left:1138.8px;top:160.2px;font-size:13.8px;transform:scaleX(1.25);">1,9650</span><span class="t" style="left:1138.8px;top:182.13px;font-size:13.8px;transform:scaleX(1.25);">8,0175</span><span class="t" style="left:1222.4px;top:7.79px;font-size:12.3px;transform:scaleX(1.33);">Purplish Blue</span><span class="t" style="left:1221.2px;top:28.62px;font-size:13.8px;transform:scaleX(1.25);">0,2035</span><span class="t" style="left:1221.2px;top:50.55px;font-size:13.8px;transform:scaleX(1.25);">0,1874</span><span class="t" style="left:1221.2px;top:72.48px;font-size:13.8px;transform:scaleX(1.25);">42,7523</span><span class="t" style="left:1221.2px;top:94.41px;font-size:13.8px;transform:scaleX(1.25);">0,2120</span><span class="t" style="left:1221.2px;top:116.34px;font-size:13.8px;transform:scaleX(1.25);">0,1892</span><span class="t" style="left:1221.2px;top:138.27px;font-size:13.8px;transform:scaleX(1.25);">44,2917</span><span class="t" style="left:1221.2px;top:160.2px;font-size:13.8px;transform:scaleX(1.25);">2,3704</span><span class="t" style="left:1221.2px;top:182.13px;font-size:13.8px;transform:scaleX(1.25);">8,6262</span><span class="t" style="left:13.9px;top:28.62px;font-size:13.8px;font-weight:700;transform:scaleX(1.2267);">x: CIE31</span><span class="t" style="left:13.9px;top:50.55px;font-size:13.8px;font-weight:700;transform:scaleX(1.2267);">y: CIE31</span><span class="t" style="left:13.9px;top:72.48px;font-size:13.8px;font-weight:700;transform:scaleX(1.2496);">Y</span><span class="t" style="left:13.9px;top:94.41px;font-size:13.8px;font-weight:700;transform:scaleX(1.2564);">Target x:CIE31</span><span class="t" style="left:13.9px;top:116.34px;font-size:13.8px;font-weight:700;transform:scaleX(1.2564);">Target y:CIE31</span><span class="t" style="left:13.9px;top:138.27px;font-size:13.8px;font-weight:700;transform:scaleX(1.268);">Target Y</span><span class="t" style="left:13.9px;top:160.2px;font-size:13.8px;font-weight:700;transform:scaleX(1.299);">ΔE 2000</span><span class="t" style="left:13.9px;top:182.13px;font-size:13.8px;font-weight:700;transform:scaleX(1.2471);">ΔE ITP</span></div><span class="t" style="left:4.04px;top:835.82px;font-size:11.2px;color:#1c1c1c;transform:scaleX(0.9072);">Cyan</span><span class="t" style="left:43.97px;top:835.82px;font-size:11.2px;color:#1c1c1c;transform:scaleX(0.9167);">100% Red</span><span class="t" style="left:105.15px;top:823.82px;font-size:11.2px;color:#1c1c1c;transform:scaleX(0.9293);">100%</span><span class="t" style="left:105.15px;top:835.82px;font-size:11.2px;color:#1c1c1c;transform:scaleX(0.952);">Green</span><span class="t" style="left:158.67px;top:823.82px;font-size:11.2px;color:#1c1c1c;transform:scaleX(0.9293);">100%</span><span class="t" style="left:158.67px;top:835.82px;font-size:11.2px;color:#1c1c1c;transform:scaleX(1.0042);">Blue</span><span class="t" style="left:210.7px;top:823.82px;font-size:11.2px;color:#1c1c1c;transform:scaleX(0.9293);">100%</span><span class="t" style="left:210.7px;top:835.82px;font-size:11.2px;color:#1c1c1c;transform:scaleX(0.9072);">Cyan</span><span class="t" style="left:254.33px;top:823.82px;font-size:11.2px;color:#1c1c1c;transform:scaleX(0.9293);">100%</span><span class="t" style="left:254.33px;top:835.82px;font-size:11.2px;color:#1c1c1c;">Magenta</span><span class="t" style="left:312.06px;top:823.82px;font-size:11.2px;color:#1c1c1c;transform:scaleX(0.9293);">100%</span><span class="t" style="left:312.06px;top:835.82px;font-size:11.2px;color:#1c1c1c;transform:scaleX(0.9706);">Yellow</span><span class="t" style="left:374.62px;top:835.82px;font-size:11.2px;color:#1c1c1c;transform:scaleX(0.8);">2E</span><span class="t" style="left:426.9px;top:835.82px;font-size:11.2px;color:#1c1c1c;transform:scaleX(0.8);">2F</span><span class="t" style="left:478.68px;top:835.82px;font-size:11.2px;color:#1c1c1c;transform:scaleX(0.8);">2K</span><span class="t" style="left:530.46px;top:835.82px;font-size:11.2px;color:#1c1c1c;transform:scaleX(0.8);">5D</span><span class="t" style="left:582.74px;top:835.82px;font-size:11.2px;color:#1c1c1c;transform:scaleX(0.8);">7E</span><span class="t" style="left:635.02px;top:835.82px;font-size:11.2px;color:#1c1c1c;transform:scaleX(0.8);">7F</span><span class="t" style="left:686.3px;top:835.82px;font-size:11.2px;color:#1c1c1c;transform:scaleX(0.8);">7G</span><span class="t" style="left:738.58px;top:835.82px;font-size:11.2px;color:#1c1c1c;transform:scaleX(0.8);">7H</span><span class="t" style="left:792.6px;top:835.82px;font-size:11.2px;color:#1c1c1c;transform:scaleX(0.8);">7I</span><span class="t" style="left:843.63px;top:835.82px;font-size:11.2px;color:#1c1c1c;transform:scaleX(0.8);">7J</span><span class="t" style="left:894.67px;top:835.82px;font-size:11.2px;color:#1c1c1c;transform:scaleX(0.8);">8D</span><span class="t" style="left:946.95px;top:835.82px;font-size:11.2px;color:#1c1c1c;transform:scaleX(0.8);">8E</span><span class="t" style="left:999.23px;top:835.82px;font-size:11.2px;color:#1c1c1c;transform:scaleX(0.8);">8F</span><span class="t" style="left:1050.51px;top:835.82px;font-size:11.2px;color:#1c1c1c;transform:scaleX(0.8);">8G</span><span class="t" style="left:1102.79px;top:835.82px;font-size:11.2px;color:#1c1c1c;transform:scaleX(0.8);">8H</span><span class="t" style="left:1156.81px;top:835.82px;font-size:11.2px;color:#1c1c1c;transform:scaleX(0.8);">8I</span><span class="t" style="left:1208.09px;top:835.82px;font-size:11.2px;font-weight:700;transform:scaleX(0.72);">8J</span><span class="t" style="left:1344.06px;top:837.68px;font-size:20.7px;color:#303030;transform:scaleX(1.1231);-webkit-text-stroke:.55px #303030;">Back</span><span class="t" style="left:1450.37px;top:837.68px;font-size:20.7px;color:#303030;transform:scaleX(1.266);-webkit-text-stroke:.55px #303030;">Next</span><span class="t" style="left:1195.15px;top:41.2px;font-size:12.4px;color:#d4d4d4;transform:scaleX(1.0735);">CIE 1976 u'v'</span><span class="t" style="left:1311.47px;top:492.36px;font-size:18.6px;color:#f4f4f4;transform:scaleX(0.9932);">RGB Triplet: 207, 143, 102</span><span class="t" style="left:946.6px;top:528.3px;font-size:12.4px;color:#d4d4d4;transform:scaleX(1.0136);">0</span><span class="t" style="left:937px;top:514px;font-size:12.4px;color:#d4d4d4;transform:scaleX(1.0136);">0</span><span class="t" style="left:987.33px;top:528.3px;font-size:12.4px;color:#d4d4d4;transform:scaleX(1.057);">0,05</span><span class="t" style="left:918.5px;top:475.59px;font-size:12.4px;color:#d4d4d4;transform:scaleX(1.057);">0,05</span><span class="t" style="left:1041.35px;top:528.3px;font-size:12.4px;color:#d4d4d4;transform:scaleX(1.0096);">0,1</span><span class="t" style="left:926.6px;top:437.17px;font-size:12.4px;color:#d4d4d4;transform:scaleX(1.0096);">0,1</span><span class="t" style="left:1087.28px;top:528.3px;font-size:12.4px;color:#d4d4d4;transform:scaleX(1.057);">0,15</span><span class="t" style="left:918.5px;top:398.76px;font-size:12.4px;color:#d4d4d4;transform:scaleX(1.057);">0,15</span><span class="t" style="left:1141.3px;top:528.3px;font-size:12.4px;color:#d4d4d4;transform:scaleX(1.0096);">0,2</span><span class="t" style="left:926.6px;top:360.34px;font-size:12.4px;color:#d4d4d4;transform:scaleX(1.0096);">0,2</span><span class="t" style="left:1187.22px;top:528.3px;font-size:12.4px;color:#d4d4d4;transform:scaleX(1.057);">0,25</span><span class="t" style="left:918.5px;top:321.93px;font-size:12.4px;color:#d4d4d4;transform:scaleX(1.057);">0,25</span><span class="t" style="left:1241.25px;top:528.3px;font-size:12.4px;color:#d4d4d4;transform:scaleX(1.0096);">0,3</span><span class="t" style="left:926.6px;top:283.51px;font-size:12.4px;color:#d4d4d4;transform:scaleX(1.0096);">0,3</span><span class="t" style="left:1287.18px;top:528.3px;font-size:12.4px;color:#d4d4d4;transform:scaleX(1.057);">0,35</span><span class="t" style="left:918.5px;top:245.1px;font-size:12.4px;color:#d4d4d4;transform:scaleX(1.057);">0,35</span><span class="t" style="left:1341.2px;top:528.3px;font-size:12.4px;color:#d4d4d4;transform:scaleX(1.0096);">0,4</span><span class="t" style="left:926.6px;top:206.68px;font-size:12.4px;color:#d4d4d4;transform:scaleX(1.0096);">0,4</span><span class="t" style="left:1387.12px;top:528.3px;font-size:12.4px;color:#d4d4d4;transform:scaleX(1.057);">0,45</span><span class="t" style="left:918.5px;top:168.27px;font-size:12.4px;color:#d4d4d4;transform:scaleX(1.057);">0,45</span><span class="t" style="left:1441.15px;top:528.3px;font-size:12.4px;color:#d4d4d4;transform:scaleX(1.0096);">0,5</span><span class="t" style="left:926.6px;top:129.85px;font-size:12.4px;color:#d4d4d4;transform:scaleX(1.0096);">0,5</span><span class="t" style="left:1487.08px;top:528.3px;font-size:12.4px;color:#d4d4d4;transform:scaleX(1.057);">0,55</span><span class="t" style="left:918.5px;top:91.44px;font-size:12.4px;color:#d4d4d4;transform:scaleX(1.057);">0,55</span>
</body></html>
